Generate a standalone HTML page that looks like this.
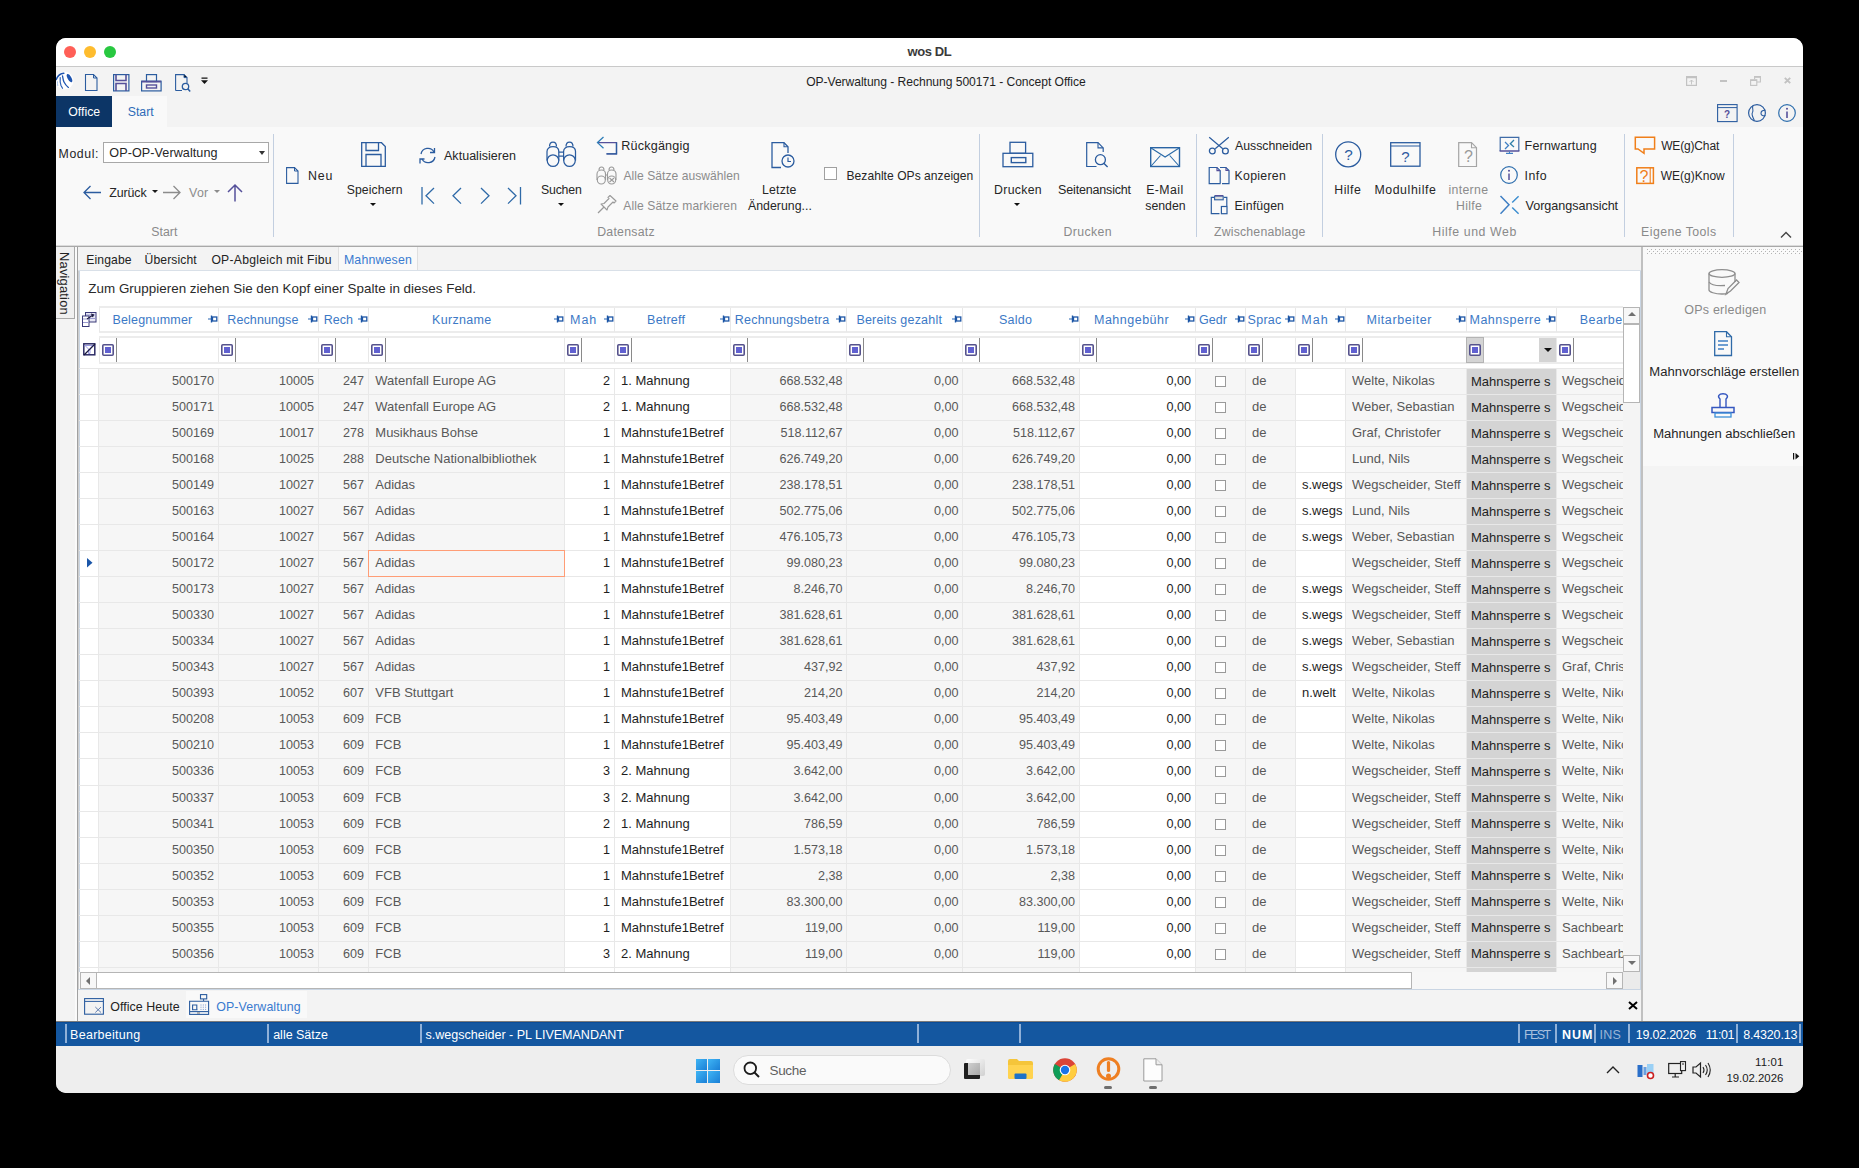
<!DOCTYPE html><html><head><meta charset="utf-8"><style>
html,body{margin:0;padding:0;background:#000;width:1859px;height:1168px;overflow:hidden}
body{font-family:"Liberation Sans", sans-serif;position:relative}
.t{position:absolute;white-space:nowrap;line-height:1em}
#win{position:absolute;left:0;top:0;width:1859px;height:1168px;clip-path:inset(38px 56px 75px 56px round 10px);background:#f3f3f3}
svg{overflow:visible}
</style></head><body><div id="win">
<div style="position:absolute;left:56px;top:38px;width:1747px;height:28px;background:#ffffff"></div>
<div style="position:absolute;left:56px;top:66px;width:1747px;height:1px;background:#c9c9c9"></div>
<div style="position:absolute;left:64px;top:46px;width:12px;height:12px;background:#ff5f57;border-radius:50%"></div>
<div style="position:absolute;left:84px;top:46px;width:12px;height:12px;background:#febc2e;border-radius:50%"></div>
<div style="position:absolute;left:104px;top:46px;width:12px;height:12px;background:#28c840;border-radius:50%"></div>
<div class="t" style="left:907.5px;top:45.00px;font-size:13px;color:#3a3a3a;font-weight:bold;;letter-spacing:-0.397px">wos DL</div>
<svg style="position:absolute;left:54px;top:70px;" width="22" height="22" viewBox="0 0 22 22"><circle cx="10.5" cy="10.5" r="9" fill="#ffffff"/>
<path d="M2.2 9.5 C3.5 6 6.5 3.5 9.8 3.2" stroke="#1f55b0" stroke-width="1.6" fill="none" stroke-linecap="round"/>
<path d="M8.5 5.8 C9 8 9 10 10 12 C11 14 12.5 16 14.4 17.4" stroke="#1f55b0" stroke-width="1.3" fill="none" stroke-linecap="round"/>
<path d="M6.2 7.5 C6 10 6 13 7 15.5 L8.5 18.3" stroke="#2f63b8" stroke-width="1.2" fill="none" stroke-linecap="round"/>
<path d="M3.4 11.3 C3.3 13 3.5 14.5 3.9 16" stroke="#a8c4ea" stroke-width="1" fill="none"/>
<ellipse cx="15.5" cy="8.1" rx="1.9" ry="4.6" transform="rotate(-28 15.5 8.1)" fill="#1f55b0"/></svg>
<svg style="position:absolute;left:85px;top:74px;" width="13" height="18" viewBox="0 0 13 18"><path d="M0.5 0.5 H8.5 L12 4 V16.5 H0.5 Z" stroke="#2b5c9f" stroke-width="1.1" fill="none"/><path d="M8.5 0.5 V4 H12" stroke="#2b5c9f" stroke-width="1" fill="none"/></svg>
<svg style="position:absolute;left:113px;top:74px;" width="17" height="18" viewBox="0 0 17 18"><rect x="0.6" y="0.6" width="15.3" height="16.3" stroke="#2b5c9f" stroke-width="1.2" fill="none"/><path d="M3 0.6 V6.5 H13 V0.6" stroke="#55509a" stroke-width="1.6" fill="none"/><path d="M3 16.9 V9.5 H13 V16.9" stroke="#55509a" stroke-width="1.6" fill="none"/></svg>
<svg style="position:absolute;left:141px;top:74px;" width="21" height="18" viewBox="0 0 21 18"><rect x="5.5" y="0.6" width="10" height="7" stroke="#2b5c9f" stroke-width="1.2" fill="none"/><rect x="0.6" y="7.2" width="19.5" height="9.7" stroke="#2b5c9f" stroke-width="1.2" fill="none"/><path d="M0.6 7.6 H20" stroke="#55509a" stroke-width="1.6"/><rect x="5.5" y="11" width="10" height="3" stroke="#55509a" stroke-width="1.4" fill="none"/></svg>
<svg style="position:absolute;left:175px;top:74px;" width="16" height="19" viewBox="0 0 16 19"><path d="M0.6 16.5 V0.6 H9 L12 3.6 V9" stroke="#2b5c9f" stroke-width="1.1" fill="none"/><path d="M0.6 16.5 H7" stroke="#2b5c9f" stroke-width="1.1"/><path d="M9 0.6 V3.6 H12" stroke="#2b5c9f" stroke-width="1"/><circle cx="10.5" cy="12.5" r="3.2" stroke="#2b5c9f" stroke-width="1.3" fill="none"/><path d="M12.8 14.8 L15.2 17.4" stroke="#2b5c9f" stroke-width="1.5"/></svg>
<svg style="position:absolute;left:201px;top:77px;" width="8" height="8" viewBox="0 0 8 8"><path d="M0.5 1.2 H6.5" stroke="#111" stroke-width="1.2"/><path d="M0 3.2 H7 L3.5 7 Z" fill="#111"/></svg>
<div class="t" style="left:806.2px;top:76.00px;font-size:12.1px;color:#1f1f1f;font-weight:normal;;letter-spacing:-0.041px">OP-Verwaltung - Rechnung 500171 - Concept Office</div>
<svg style="position:absolute;left:1686px;top:76px;" width="11" height="10" viewBox="0 0 11 10"><rect x="0.6" y="0.6" width="9.8" height="8.8" stroke="#c2c2c2" stroke-width="1.2" fill="none"/><path d="M0.6 1.4 H10.4" stroke="#c2c2c2" stroke-width="1.6"/><path d="M5.5 8.5 V4 M3.5 6 L5.5 4 L7.5 6" stroke="#c2c2c2" stroke-width="0.9" fill="none"/></svg>
<svg style="position:absolute;left:1720px;top:80px;" width="8" height="2" viewBox="0 0 8 2"><path d="M0 1 H7" stroke="#c2c2c2" stroke-width="2"/></svg>
<svg style="position:absolute;left:1750px;top:76px;" width="11" height="10" viewBox="0 0 11 10"><path d="M4.6 3.2 V0.6 H10.4 V6 H7" stroke="#c2c2c2" stroke-width="1.1" fill="none"/><path d="M4.6 1.1 H10.4" stroke="#c2c2c2" stroke-width="1.2"/><rect x="0.6" y="3.8" width="6.2" height="5.6" stroke="#c2c2c2" stroke-width="1.1" fill="none"/><path d="M0.6 4.3 H6.8" stroke="#c2c2c2" stroke-width="1.2"/></svg>
<svg style="position:absolute;left:1784px;top:77px;" width="7" height="7" viewBox="0 0 7 7"><path d="M0.8 0.8 L6.2 6.2 M6.2 0.8 L0.8 6.2" stroke="#c2c2c2" stroke-width="1.9"/></svg>
<div style="position:absolute;left:56px;top:96px;width:56px;height:31px;background:#0c3566"></div>
<div class="t" style="left:68.3px;top:106.00px;font-size:12.3px;color:#ffffff;font-weight:normal;;letter-spacing:-0.011px">Office</div>
<div style="position:absolute;left:112px;top:96px;width:55px;height:31px;background:#f9f9f9"></div>
<div class="t" style="left:127.7px;top:106.00px;font-size:12.3px;color:#2e6cb8;font-weight:normal;;letter-spacing:0.012px">Start</div>
<svg style="position:absolute;left:1717px;top:104px;" width="21" height="18" viewBox="0 0 21 18"><rect x="0.6" y="0.6" width="19.5" height="17" stroke="#2b5c9f" stroke-width="1.1" fill="none"/><path d="M0.6 3.6 H20" stroke="#2b5c9f" stroke-width="1"/></svg>
<div class="t" style="left:1427px;width:600px;text-align:center;top:110.00px;font-size:10px;color:#55509a;font-weight:bold;">?</div>
<svg style="position:absolute;left:1748px;top:104px;" width="19" height="19" viewBox="0 0 19 19"><circle cx="9" cy="9" r="8.4" stroke="#2b5c9f" stroke-width="1.2" fill="none"/><path d="M5 1.5 C3.5 4 6 6 4.5 8.5 C3 10.5 5 13 6.5 16.8" stroke="#2b5c9f" stroke-width="1.1" fill="none"/><path d="M17.3 6.2 C14.5 6 12.8 7.5 13 9.6 C13.2 11.6 15.5 12.3 17.4 11.6" stroke="#2b5c9f" stroke-width="1.1" fill="none"/></svg>
<svg style="position:absolute;left:1778px;top:104px;" width="19" height="19" viewBox="0 0 19 19"><circle cx="9" cy="9" r="8.3" stroke="#2f6fae" stroke-width="1.2" fill="none"/><path d="M9 7.5 V14" stroke="#55509a" stroke-width="1.6"/><circle cx="9" cy="4.8" r="1" fill="#55509a"/></svg>
<div style="position:absolute;left:56px;top:127px;width:1747px;height:119px;background:#f9f9f9"></div>
<div style="position:absolute;left:56px;top:245px;width:1747px;height:1px;background:#dcdcdc"></div>
<div style="position:absolute;left:56px;top:246px;width:1747px;height:1px;background:#a9a9a9"></div>
<div class="t" style="left:58.6px;top:148.00px;font-size:12.3px;color:#262626;font-weight:normal;;letter-spacing:0.582px">Modul:</div>
<div style="position:absolute;left:103px;top:142px;width:166px;height:21px;background:#fff;border:1px solid #a8a8a8;box-sizing:border-box"></div>
<div class="t" style="left:109.3px;top:147.00px;font-size:12.6px;color:#262626;font-weight:normal;;letter-spacing:0.074px">OP-OP-Verwaltung</div>
<div style="position:absolute;left:259.0px;top:151px;width:0;height:0;border-left:3.5px solid transparent;border-right:3.5px solid transparent;border-top:4.0px solid #333"></div>
<svg style="position:absolute;left:83px;top:185px;" width="19" height="16" viewBox="0 0 19 16"><path d="M1 7.5 H18 M7.5 1 L1 7.5 L7.5 14" stroke="#2b5c9f" stroke-width="1.3" fill="none"/></svg>
<div class="t" style="left:109.3px;top:187.00px;font-size:12.4px;color:#262626;font-weight:normal;;letter-spacing:-0.114px">Zurück</div>
<div style="position:absolute;left:151.5px;top:189.5px;width:0;height:0;border-left:3.0px solid transparent;border-right:3.0px solid transparent;border-top:3.5px solid #1a1a1a"></div>
<svg style="position:absolute;left:163px;top:185px;" width="19" height="16" viewBox="0 0 19 16"><path d="M0 7.5 H17 M10.5 1 L17 7.5 L10.5 14" stroke="#8c8c8c" stroke-width="1.3" fill="none"/></svg>
<div class="t" style="left:189.1px;top:187.00px;font-size:12.4px;color:#8c8c8c;font-weight:normal;;letter-spacing:0.214px">Vor</div>
<div style="position:absolute;left:214.0px;top:189.5px;width:0;height:0;border-left:3.0px solid transparent;border-right:3.0px solid transparent;border-top:3.5px solid #8c8c8c"></div>
<svg style="position:absolute;left:227px;top:184px;" width="17" height="18" viewBox="0 0 17 18"><path d="M8 17.5 V1.5 M1 8 L8 1 L15 8" stroke="#55509a" stroke-width="1.5" fill="none"/></svg>
<div class="t" style="left:151.3px;top:226.00px;font-size:12.3px;color:#8a8a8a;font-weight:normal;;letter-spacing:0.012px">Start</div>
<div style="position:absolute;left:273px;top:134px;width:1px;height:103px;background:#c3cfe0"></div>
<svg style="position:absolute;left:286px;top:167px;" width="13" height="17" viewBox="0 0 13 17"><path d="M0.6 0.6 H8.5 L12 4 V16.4 H0.6 Z" stroke="#2b5c9f" stroke-width="1.1" fill="none"/><path d="M8.5 0.6 V4 H12" stroke="#2b5c9f" stroke-width="1" fill="none"/></svg>
<div class="t" style="left:307.9px;top:170.00px;font-size:12.4px;color:#262626;font-weight:normal;;letter-spacing:0.930px">Neu</div>
<svg style="position:absolute;left:361px;top:142px;" width="25" height="25" viewBox="0 0 25 25"><path d="M0.7 0.7 H20.5 L24.3 4.5 V24.3 H0.7 Z" stroke="#2b5c9f" stroke-width="1.3" fill="none"/><path d="M5 0.7 V8.5 H17.5 V0.7" stroke="#2b5c9f" stroke-width="1.3" fill="none"/><path d="M5 24.3 V12.5 H20 V24.3" stroke="#2b5c9f" stroke-width="1.3" fill="none"/></svg>
<div class="t" style="left:346.7px;top:184.00px;font-size:12.2px;color:#262626;font-weight:normal;;letter-spacing:0.125px">Speichern</div>
<div style="position:absolute;left:370.0px;top:203px;width:0;height:0;border-left:3.0px solid transparent;border-right:3.0px solid transparent;border-top:3.5px solid #111"></div>
<svg style="position:absolute;left:419px;top:147px;" width="18" height="18" viewBox="0 0 18 18"><path d="M2 7 A7 7 0 0 1 15 5" stroke="#2b5c9f" stroke-width="1.3" fill="none"/><path d="M15.5 1 V5.5 H11" stroke="#2b5c9f" stroke-width="1.3" fill="none"/><path d="M16 10 A7 7 0 0 1 3 12" stroke="#2b5c9f" stroke-width="1.3" fill="none"/><path d="M1 16.5 V12 H5.5" stroke="#2b5c9f" stroke-width="1.3" fill="none"/></svg>
<div class="t" style="left:444px;top:150.00px;font-size:12.5px;color:#262626;font-weight:normal;;letter-spacing:0.032px">Aktualisieren</div>
<svg style="position:absolute;left:421px;top:187px;" width="14" height="18" viewBox="0 0 14 18"><path d="M1 0 V17.5" stroke="#2f6aa8" stroke-width="1.3"/><path d="M13 1 L5 8.8 L13 16.6" stroke="#2f6aa8" stroke-width="1.3" fill="none"/></svg>
<svg style="position:absolute;left:451px;top:187px;" width="11" height="18" viewBox="0 0 11 18"><path d="M10 1 L2 8.8 L10 16.6" stroke="#2f6aa8" stroke-width="1.3" fill="none"/></svg>
<svg style="position:absolute;left:480px;top:187px;" width="11" height="18" viewBox="0 0 11 18"><path d="M1 1 L9 8.8 L1 16.6" stroke="#2f6aa8" stroke-width="1.3" fill="none"/></svg>
<svg style="position:absolute;left:507px;top:187px;" width="15" height="18" viewBox="0 0 15 18"><path d="M13.5 0 V17.5" stroke="#2f6aa8" stroke-width="1.3"/><path d="M1 1 L9 8.8 L1 16.6" stroke="#2f6aa8" stroke-width="1.3" fill="none"/></svg>
<svg style="position:absolute;left:546px;top:141px;" width="31" height="28" viewBox="0 0 31 28"><g transform="scale(1.0)" stroke="#2b5c9f" stroke-width="1.25" fill="none">
<path d="M3.5 5.6 C3.5 2.5 5 1 7 1 C9 1 10.5 2.5 10.5 5.6"/><path d="M20 5.6 C20 2.5 21.5 1 23.5 1 C25.5 1 27 2.5 27 5.6"/>
<path d="M1 19.5 V10.5 C1 7.5 3.5 5.6 7 5.6 C10.5 5.6 12.8 7.5 12.8 10.5 V19.5"/><path d="M17.6 19.5 V10.5 C17.6 7.5 20 5.6 23.5 5.6 C27 5.6 29.5 7.5 29.5 10.5 V19.5"/>
<circle cx="7" cy="19.6" r="5.8"/><circle cx="23.5" cy="19.6" r="5.8"/>
<path d="M12.8 11 H17.6 M12.8 15 H17.6"/></g></svg>
<div class="t" style="left:540.9px;top:184.00px;font-size:12.3px;color:#262626;font-weight:normal;;letter-spacing:-0.153px">Suchen</div>
<div style="position:absolute;left:558.0px;top:203px;width:0;height:0;border-left:3.0px solid transparent;border-right:3.0px solid transparent;border-top:3.5px solid #111"></div>
<svg style="position:absolute;left:596px;top:136px;" width="22" height="20" viewBox="0 0 22 20"><path d="M1.5 6.6 H20.5 V17.9 H10.5" stroke="#55509a" stroke-width="1.3" fill="none"/><path d="M20.5 6.6 V17.9 H10.5" stroke="#2b5c9f" stroke-width="1.3" fill="none"/><path d="M7.5 1 L1.5 6.6 L7.5 12.3" stroke="#2f7fb8" stroke-width="1.3" fill="none"/></svg>
<div class="t" style="left:621.3px;top:140.00px;font-size:12.6px;color:#262626;font-weight:normal;;letter-spacing:0.177px">Rückgängig</div>
<svg style="position:absolute;left:596px;top:166px;" width="22" height="19" viewBox="0 0 22 19"><g stroke="#9a9a9a" stroke-width="1.1" fill="none"><path d="M3 4 C3 2 4 1 5.5 1 C7 1 8 2 8 4 M13 4 C13 2 14 1 15.5 1 C17 1 18 2 18 4"/><path d="M1 14 V8 C1 5.5 3 4 5.5 4 C8 4 9.5 5.5 9.5 8 V14 M11.5 14 V8 C11.5 5.5 13 4 15.5 4 C18 4 20 5.5 20 8 V14"/><circle cx="5.3" cy="14" r="4"/><circle cx="15.7" cy="14" r="4"/><path d="M9.5 9 H11.5 M13.5 12 L18 16 M18 12 L13.5 16"/></g></svg>
<div class="t" style="left:623.4px;top:170.00px;font-size:12.1px;color:#8c8c8c;font-weight:normal;;letter-spacing:0.042px">Alle Sätze auswählen</div>
<svg style="position:absolute;left:597px;top:195px;" width="20" height="19" viewBox="0 0 20 19"><path d="M1 18 L7 12" stroke="#9a9a9a" stroke-width="1.2"/><path d="M4 9 L10 15 L11 12 L16 7 L17 8 L19 6 L13 0.5 L11 2.5 L12 3.5 L7 8.5 Z" stroke="#9a9a9a" stroke-width="1.1" fill="none" stroke-linejoin="round"/></svg>
<div class="t" style="left:623.3px;top:200.00px;font-size:12.1px;color:#8c8c8c;font-weight:normal;;letter-spacing:0.108px">Alle Sätze markieren</div>
<svg style="position:absolute;left:771px;top:142px;" width="25" height="27" viewBox="0 0 25 27"><path d="M10 25.5 H1 V0.7 H13 L17 4.7 V11" stroke="#2b5c9f" stroke-width="1.3" fill="none"/><path d="M13 0.7 V4.7 H17" stroke="#2b5c9f" stroke-width="1.1" fill="none"/><circle cx="17" cy="19" r="6" stroke="#2b5c9f" stroke-width="1.3" fill="#f9f9f9"/><path d="M17 15.5 V19.5 H20" stroke="#2b5c9f" stroke-width="1.2" fill="none"/></svg>
<div class="t" style="left:762.1px;top:184.00px;font-size:12.3px;color:#262626;font-weight:normal;;letter-spacing:0.148px">Letzte</div>
<div class="t" style="left:748px;top:200.00px;font-size:12.3px;color:#262626;font-weight:normal;;letter-spacing:0.034px">Änderung...</div>
<div style="position:absolute;left:824px;top:167px;width:13px;height:13px;border:1px solid #a0a0a0;box-sizing:border-box;background:#fff"></div>
<div class="t" style="left:846.5px;top:170.00px;font-size:12.05px;color:#262626;font-weight:normal;;letter-spacing:0.045px">Bezahlte OPs anzeigen</div>
<div class="t" style="left:597.2px;top:226.00px;font-size:12.3px;color:#8a8a8a;font-weight:normal;;letter-spacing:0.260px">Datensatz</div>
<div style="position:absolute;left:979px;top:134px;width:1px;height:103px;background:#c3cfe0"></div>
<svg style="position:absolute;left:1002px;top:141px;" width="32" height="27" viewBox="0 0 32 27"><rect x="8" y="1.3" width="15.6" height="11" stroke="#2b5c9f" stroke-width="1.3" fill="none"/><rect x="1" y="12.3" width="29.8" height="13.4" stroke="#2b5c9f" stroke-width="1.3" fill="#f9f9f9"/><rect x="9.3" y="16.6" width="14.5" height="5" stroke="#2b5c9f" stroke-width="1.4" fill="none"/></svg>
<div class="t" style="left:994.1px;top:184.00px;font-size:12.3px;color:#262626;font-weight:normal;;letter-spacing:0.292px">Drucken</div>
<div style="position:absolute;left:1014.0px;top:203px;width:0;height:0;border-left:3.0px solid transparent;border-right:3.0px solid transparent;border-top:3.5px solid #111"></div>
<svg style="position:absolute;left:1086px;top:142px;" width="24" height="26" viewBox="0 0 24 26"><path d="M10.5 24.5 H0.7 V0.7 H12 L17.2 5.9 V10" stroke="#2b5c9f" stroke-width="1.2" fill="none"/><path d="M12 0.7 V5.9 H17.2" stroke="#2b5c9f" stroke-width="1.1" fill="none"/><circle cx="14.4" cy="17.7" r="5" stroke="#2b5c9f" stroke-width="1.3" fill="none"/><path d="M17.8 21.2 L21.6 25" stroke="#2b5c9f" stroke-width="1.4"/></svg>
<div class="t" style="left:1058.1px;top:184.00px;font-size:12.5px;color:#262626;font-weight:normal;;letter-spacing:-0.173px">Seitenansicht</div>
<svg style="position:absolute;left:1150px;top:147px;" width="31" height="21" viewBox="0 0 31 21"><rect x="0.7" y="0.7" width="28.8" height="18.8" stroke="#2a64a4" stroke-width="1.4" fill="none"/><path d="M0.7 0.7 L15.1 10 L29.5 0.7 M0.7 19.5 L10.5 8.5 M29.5 19.5 L19.7 8.5" stroke="#2a6aa8" stroke-width="1.1" fill="none"/></svg>
<div class="t" style="left:1146.2px;top:184.00px;font-size:12.3px;color:#262626;font-weight:normal;;letter-spacing:0.418px">E-Mail</div>
<div class="t" style="left:1145.3px;top:200.00px;font-size:12.3px;color:#262626;font-weight:normal;;letter-spacing:-0.001px">senden</div>
<div class="t" style="left:1063.4px;top:226.00px;font-size:12.3px;color:#8a8a8a;font-weight:normal;;letter-spacing:0.408px">Drucken</div>
<div style="position:absolute;left:1196px;top:134px;width:1px;height:103px;background:#c3cfe0"></div>
<svg style="position:absolute;left:1208px;top:136px;" width="22" height="19" viewBox="0 0 22 19"><path d="M1.2 1.2 L14.8 12.8 M20.8 1.2 L7.2 12.8" stroke="#2b5c9f" stroke-width="1.2" fill="none"/><circle cx="4.3" cy="15" r="2.9" stroke="#2b5c9f" stroke-width="1.3" fill="#f9f9f9"/><circle cx="17.4" cy="15" r="2.9" stroke="#2b5c9f" stroke-width="1.3" fill="#f9f9f9"/></svg>
<div class="t" style="left:1235.1px;top:140.00px;font-size:12.3px;color:#262626;font-weight:normal;;letter-spacing:-0.019px">Ausschneiden</div>
<svg style="position:absolute;left:1208px;top:166px;" width="22" height="19" viewBox="0 0 22 19"><path d="M12.6 17.6 H1.2 V1.5 H9 L12.2 4.7 V17.6" stroke="#2b5c9f" stroke-width="1.2" fill="none"/><path d="M9 1.5 V4.7 H12.2" stroke="#55509a" stroke-width="1.2" fill="none"/><path d="M12 1.5 H18 L21 4.5 V17.6 H14" stroke="#2b5c9f" stroke-width="1.2" fill="none"/><path d="M18 1.5 V4.5 H21" stroke="#55509a" stroke-width="1.2" fill="none"/></svg>
<div class="t" style="left:1234.5px;top:170.00px;font-size:12.3px;color:#262626;font-weight:normal;;letter-spacing:0.302px">Kopieren</div>
<svg style="position:absolute;left:1210px;top:194px;" width="18" height="21" viewBox="0 0 18 21"><path d="M4 3.3 H1.3 V19.6 H9.5" stroke="#2b5c9f" stroke-width="1.2" fill="none"/><path d="M14 3.3 H16.8 V12" stroke="#2b5c9f" stroke-width="1.2" fill="none"/><rect x="4.6" y="2" width="8.6" height="3.8" stroke="#2b5c9f" stroke-width="1.1" fill="#e0e0e0"/><path d="M5 1.6 H13" stroke="#55509a" stroke-width="1.4"/><rect x="11.4" y="12.5" width="5.6" height="7.2" stroke="#2b5c9f" stroke-width="1.2" fill="none"/></svg>
<div class="t" style="left:1234.5px;top:200.00px;font-size:12.3px;color:#262626;font-weight:normal;;letter-spacing:0.128px">Einfügen</div>
<div class="t" style="left:1214px;top:226.00px;font-size:12.3px;color:#8a8a8a;font-weight:normal;;letter-spacing:0.183px">Zwischenablage</div>
<div style="position:absolute;left:1322px;top:134px;width:1px;height:103px;background:#c3cfe0"></div>
<svg style="position:absolute;left:1335px;top:141px;" width="28" height="27" viewBox="0 0 28 27"><circle cx="13.2" cy="13.4" r="12.5" stroke="#2b5c9f" stroke-width="1.3" fill="none"/></svg>
<div class="t" style="left:1048.5px;width:600px;text-align:center;top:147.00px;font-size:15.3px;color:#2b5c9f;font-weight:normal;">?</div>
<div class="t" style="left:1334.3px;top:184.00px;font-size:12.3px;color:#262626;font-weight:normal;;letter-spacing:0.460px">Hilfe</div>
<svg style="position:absolute;left:1390px;top:142px;" width="31" height="25" viewBox="0 0 31 25"><rect x="0.7" y="0.7" width="29.3" height="23.5" stroke="#2b5c9f" stroke-width="1.3" fill="none"/><path d="M0.7 4 H30" stroke="#2b5c9f" stroke-width="1.2"/></svg>
<div class="t" style="left:1105.5px;width:600px;text-align:center;top:149.00px;font-size:15px;color:#2e5aa0;font-weight:normal;">?</div>
<div class="t" style="left:1374.4px;top:184.00px;font-size:12.3px;color:#262626;font-weight:normal;;letter-spacing:0.599px">Modulhilfe</div>
<svg style="position:absolute;left:1458px;top:142px;" width="20" height="26" viewBox="0 0 20 26"><path d="M0.7 0.7 H13.5 L18.5 5.7 V24.5 H0.7 Z" stroke="#a5a5a5" stroke-width="1.2" fill="none"/><path d="M13.5 0.7 V5.7 H18.5" stroke="#a5a5a5" stroke-width="1.1" fill="none"/></svg>
<div class="t" style="left:1168.5px;width:600px;text-align:center;top:149.00px;font-size:16px;color:#9a9a9a;font-weight:normal;">?</div>
<div class="t" style="left:1448.4px;top:184.00px;font-size:12.3px;color:#8c8c8c;font-weight:normal;;letter-spacing:0.340px">interne</div>
<div class="t" style="left:1456.1px;top:200.00px;font-size:12.3px;color:#8c8c8c;font-weight:normal;;letter-spacing:0.310px">Hilfe</div>
<svg style="position:absolute;left:1499px;top:136px;" width="21" height="20" viewBox="0 0 21 20"><path d="M1.2 15 V1.3 H19.8 V15" stroke="#2b5c9f" stroke-width="1.2" fill="none" opacity="0.9"/><path d="M0.6 15 H20.4" stroke="#55509a" stroke-width="1.6"/><path d="M7 17.3 H14" stroke="#3f7fc4" stroke-width="1.3"/><path d="M10.5 15.5 V17" stroke="#3f7fc4" stroke-width="1"/><path d="M6 6 L9.5 9.5 L6 13" stroke="#3f7fc4" stroke-width="1.3" fill="none"/><path d="M15 4 L11.3 7.8 L15 11" stroke="#2e7fa8" stroke-width="1.3" fill="none"/></svg>
<div class="t" style="left:1524.6px;top:140.00px;font-size:12.5px;color:#262626;font-weight:normal;;letter-spacing:0.188px">Fernwartung</div>
<svg style="position:absolute;left:1500px;top:166px;" width="19" height="19" viewBox="0 0 19 19"><circle cx="9" cy="9" r="8.3" stroke="#2f6fae" stroke-width="1.2" fill="none"/><path d="M9 7.5 V14" stroke="#55509a" stroke-width="1.5"/><circle cx="9" cy="4.8" r="1" fill="#55509a"/></svg>
<div class="t" style="left:1524.6px;top:170.00px;font-size:12.3px;color:#262626;font-weight:normal;;letter-spacing:0.476px">Info</div>
<svg style="position:absolute;left:1499px;top:195px;" width="21" height="20" viewBox="0 0 21 20"><path d="M1.5 1 L10 9.8 L1.5 18.8" stroke="#3f7fc4" stroke-width="1.5" fill="none"/><path d="M19.6 1.3 L13.2 7.5 M13.2 12.5 L19.6 18.8" stroke="#3f8fd0" stroke-width="1.5" fill="none"/></svg>
<div class="t" style="left:1525.6px;top:200.00px;font-size:12.6px;color:#262626;font-weight:normal;;letter-spacing:-0.044px">Vorgangsansicht</div>
<div class="t" style="left:1432.3px;top:226.00px;font-size:12.3px;color:#8a8a8a;font-weight:normal;;letter-spacing:0.577px">Hilfe und Web</div>
<div style="position:absolute;left:1624px;top:134px;width:1px;height:103px;background:#c3cfe0"></div>
<svg style="position:absolute;left:1634px;top:136px;" width="22" height="19" viewBox="0 0 22 19"><path d="M1.3 1.3 H20.6 V13 H10 V17.3 L4 13 H1.3 Z" stroke="#f07f1a" stroke-width="1.5" fill="none" stroke-linejoin="miter"/></svg>
<div class="t" style="left:1661.2px;top:140.00px;font-size:12.0px;color:#262626;font-weight:normal;;letter-spacing:-0.164px">WE(g)Chat</div>
<svg style="position:absolute;left:1636px;top:167px;" width="18" height="17" viewBox="0 0 18 17"><rect x="0.8" y="0.8" width="16.6" height="15.6" stroke="#f07f1a" stroke-width="1.5" fill="none"/><path d="M14.2 0.8 V16.4" stroke="#f07f1a" stroke-width="1.1"/></svg>
<div class="t" style="left:1344px;width:600px;text-align:center;top:169.00px;font-size:16px;color:#f07f1a;font-weight:normal;">?</div>
<div class="t" style="left:1660.8px;top:170.00px;font-size:12.0px;color:#262626;font-weight:normal;;letter-spacing:-0.006px">WE(g)Know</div>
<div class="t" style="left:1641.1px;top:226.00px;font-size:12.3px;color:#8a8a8a;font-weight:normal;;letter-spacing:0.440px">Eigene Tools</div>
<div style="position:absolute;left:1733px;top:134px;width:1px;height:103px;background:#c3cfe0"></div>
<svg style="position:absolute;left:1780px;top:231px;" width="12" height="8" viewBox="0 0 12 8"><path d="M1 6.5 L6 1.5 L11 6.5" stroke="#444" stroke-width="1.4" fill="none"/></svg>
<div style="position:absolute;left:56px;top:247px;width:19px;height:72px;background:#f0f0f0;border-right:1px solid #a9a9a9;border-bottom:1px solid #a9a9a9;box-sizing:border-box"></div>
<div style="position:absolute;left:75px;top:247px;width:2px;height:775px;background:#fafafa"></div>
<div class="t" style="left:56.5px;top:252px;font-size:12.9px;color:#222;writing-mode:vertical-rl;line-height:14px;letter-spacing:0.2px">Navigation</div>
<div style="position:absolute;left:77px;top:247px;width:1px;height:775px;background:#a0a0a0"></div>
<div style="position:absolute;left:78px;top:247px;width:1564px;height:23px;background:#f3f3f3"></div>
<div style="position:absolute;left:78px;top:270px;width:1564px;height:1px;background:#d9e0e8"></div>
<div style="position:absolute;left:338px;top:247px;width:80px;height:23px;background:#f9f9f9;border-left:1px solid #e0e0e0;border-right:1px solid #e0e0e0;box-sizing:border-box"></div>
<div class="t" style="left:86.2px;top:254.00px;font-size:12.15px;color:#222;font-weight:normal;;letter-spacing:0.133px">Eingabe</div>
<div class="t" style="left:144.6px;top:254.00px;font-size:12.15px;color:#222;font-weight:normal;;letter-spacing:0.099px">Übersicht</div>
<div class="t" style="left:211.4px;top:254.00px;font-size:12.15px;color:#222;font-weight:normal;;letter-spacing:0.287px">OP-Abgleich mit Fibu</div>
<div class="t" style="left:343.9px;top:254.00px;font-size:12.35px;color:#3a7bd0;font-weight:normal;;letter-spacing:0.176px">Mahnwesen</div>
<div style="position:absolute;left:78px;top:271px;width:1564px;height:719px;background:#ffffff"></div>
<div style="position:absolute;left:78px;top:271px;width:1px;height:751px;background:#cfcfcf"></div>
<div style="position:absolute;left:79px;top:271px;width:1px;height:719px;background:#c9d5e3"></div>
<div class="t" style="left:88.3px;top:282.00px;font-size:13.4px;color:#2a2a2a;font-weight:normal;;letter-spacing:0.023px">Zum Gruppieren ziehen Sie den Kopf einer Spalte in dieses Feld.</div>
<div style="position:absolute;left:0;top:0;width:1623px;height:972px;overflow:hidden">
<div style="position:absolute;left:99px;top:306px;width:1524px;height:2px;background:#ececec"></div>
<div style="position:absolute;left:99px;top:331px;width:1524px;height:2px;background:#ececec"></div>
<div style="position:absolute;left:99px;top:336px;width:1524px;height:2px;background:#ececec"></div>
<div style="position:absolute;left:99px;top:362px;width:1524px;height:2px;background:#ececec"></div>
<div style="position:absolute;left:99px;top:308px;width:1px;height:24px;background:#e8e8e8"></div>
<div style="position:absolute;left:99px;top:338px;width:1px;height:24px;background:#e8e8e8"></div>
<svg style="position:absolute;left:208px;top:315px;" width="10" height="9" viewBox="0 0 10 9"><path d="M0 4 H3" stroke="#4a7fc0" stroke-width="1.2"/><path d="M3.5 0.5 V7.5" stroke="#1d56a6" stroke-width="1.4"/><rect x="4.5" y="2" width="4.3" height="4" stroke="#1d56a6" stroke-width="1.3" fill="none"/></svg>
<div class="t" style="left:112.39999999999999px;top:314.00px;font-size:12.5px;color:#3c79c6;font-weight:normal;letter-spacing:0.2px">Belegnummer</div>
<svg style="position:absolute;left:102px;top:344px;" width="12" height="12" viewBox="0 0 12 12"><rect x="0.8" y="0.8" width="10.4" height="10.4" rx="1" stroke="#55528c" stroke-width="1.6" fill="#fff"/><rect x="3" y="3" width="6" height="6" fill="#6060d0"/></svg>
<div style="position:absolute;left:116px;top:338px;width:1px;height:24px;background:#8a8a8a"></div>
<div style="position:absolute;left:218px;top:308px;width:1px;height:24px;background:#e8e8e8"></div>
<div style="position:absolute;left:218px;top:338px;width:1px;height:24px;background:#e8e8e8"></div>
<svg style="position:absolute;left:308px;top:315px;" width="10" height="9" viewBox="0 0 10 9"><path d="M0 4 H3" stroke="#4a7fc0" stroke-width="1.2"/><path d="M3.5 0.5 V7.5" stroke="#1d56a6" stroke-width="1.4"/><rect x="4.5" y="2" width="4.3" height="4" stroke="#1d56a6" stroke-width="1.3" fill="none"/></svg>
<div class="t" style="left:227.3px;top:314.00px;font-size:12.5px;color:#3c79c6;font-weight:normal;letter-spacing:0.1px">Rechnungse</div>
<svg style="position:absolute;left:221px;top:344px;" width="12" height="12" viewBox="0 0 12 12"><rect x="0.8" y="0.8" width="10.4" height="10.4" rx="1" stroke="#55528c" stroke-width="1.6" fill="#fff"/><rect x="3" y="3" width="6" height="6" fill="#6060d0"/></svg>
<div style="position:absolute;left:235px;top:338px;width:1px;height:24px;background:#8a8a8a"></div>
<div style="position:absolute;left:318px;top:308px;width:1px;height:24px;background:#e8e8e8"></div>
<div style="position:absolute;left:318px;top:338px;width:1px;height:24px;background:#e8e8e8"></div>
<svg style="position:absolute;left:358px;top:315px;" width="10" height="9" viewBox="0 0 10 9"><path d="M0 4 H3" stroke="#4a7fc0" stroke-width="1.2"/><path d="M3.5 0.5 V7.5" stroke="#1d56a6" stroke-width="1.4"/><rect x="4.5" y="2" width="4.3" height="4" stroke="#1d56a6" stroke-width="1.3" fill="none"/></svg>
<div class="t" style="left:323.8px;top:314.00px;font-size:12.5px;color:#3c79c6;font-weight:normal;letter-spacing:0px">Rech</div>
<svg style="position:absolute;left:321px;top:344px;" width="12" height="12" viewBox="0 0 12 12"><rect x="0.8" y="0.8" width="10.4" height="10.4" rx="1" stroke="#55528c" stroke-width="1.6" fill="#fff"/><rect x="3" y="3" width="6" height="6" fill="#6060d0"/></svg>
<div style="position:absolute;left:335px;top:338px;width:1px;height:24px;background:#8a8a8a"></div>
<div style="position:absolute;left:368px;top:308px;width:1px;height:24px;background:#e8e8e8"></div>
<div style="position:absolute;left:368px;top:338px;width:1px;height:24px;background:#e8e8e8"></div>
<svg style="position:absolute;left:554px;top:315px;" width="10" height="9" viewBox="0 0 10 9"><path d="M0 4 H3" stroke="#4a7fc0" stroke-width="1.2"/><path d="M3.5 0.5 V7.5" stroke="#1d56a6" stroke-width="1.4"/><rect x="4.5" y="2" width="4.3" height="4" stroke="#1d56a6" stroke-width="1.3" fill="none"/></svg>
<div class="t" style="left:432.1px;top:314.00px;font-size:12.5px;color:#3c79c6;font-weight:normal;letter-spacing:0.3px">Kurzname</div>
<svg style="position:absolute;left:371px;top:344px;" width="12" height="12" viewBox="0 0 12 12"><rect x="0.8" y="0.8" width="10.4" height="10.4" rx="1" stroke="#55528c" stroke-width="1.6" fill="#fff"/><rect x="3" y="3" width="6" height="6" fill="#6060d0"/></svg>
<div style="position:absolute;left:385px;top:338px;width:1px;height:24px;background:#8a8a8a"></div>
<div style="position:absolute;left:564px;top:308px;width:1px;height:24px;background:#e8e8e8"></div>
<div style="position:absolute;left:564px;top:338px;width:1px;height:24px;background:#e8e8e8"></div>
<svg style="position:absolute;left:604px;top:315px;" width="10" height="9" viewBox="0 0 10 9"><path d="M0 4 H3" stroke="#4a7fc0" stroke-width="1.2"/><path d="M3.5 0.5 V7.5" stroke="#1d56a6" stroke-width="1.4"/><rect x="4.5" y="2" width="4.3" height="4" stroke="#1d56a6" stroke-width="1.3" fill="none"/></svg>
<div class="t" style="left:570.0px;top:314.00px;font-size:12.5px;color:#3c79c6;font-weight:normal;letter-spacing:1.0px">Mah</div>
<svg style="position:absolute;left:567px;top:344px;" width="12" height="12" viewBox="0 0 12 12"><rect x="0.8" y="0.8" width="10.4" height="10.4" rx="1" stroke="#55528c" stroke-width="1.6" fill="#fff"/><rect x="3" y="3" width="6" height="6" fill="#6060d0"/></svg>
<div style="position:absolute;left:581px;top:338px;width:1px;height:24px;background:#8a8a8a"></div>
<div style="position:absolute;left:614px;top:308px;width:1px;height:24px;background:#e8e8e8"></div>
<div style="position:absolute;left:614px;top:338px;width:1px;height:24px;background:#e8e8e8"></div>
<svg style="position:absolute;left:720px;top:315px;" width="10" height="9" viewBox="0 0 10 9"><path d="M0 4 H3" stroke="#4a7fc0" stroke-width="1.2"/><path d="M3.5 0.5 V7.5" stroke="#1d56a6" stroke-width="1.4"/><rect x="4.5" y="2" width="4.3" height="4" stroke="#1d56a6" stroke-width="1.3" fill="none"/></svg>
<div class="t" style="left:647.0999999999999px;top:314.00px;font-size:12.5px;color:#3c79c6;font-weight:normal;letter-spacing:0.2px">Betreff</div>
<svg style="position:absolute;left:617px;top:344px;" width="12" height="12" viewBox="0 0 12 12"><rect x="0.8" y="0.8" width="10.4" height="10.4" rx="1" stroke="#55528c" stroke-width="1.6" fill="#fff"/><rect x="3" y="3" width="6" height="6" fill="#6060d0"/></svg>
<div style="position:absolute;left:631px;top:338px;width:1px;height:24px;background:#8a8a8a"></div>
<div style="position:absolute;left:730px;top:308px;width:1px;height:24px;background:#e8e8e8"></div>
<div style="position:absolute;left:730px;top:338px;width:1px;height:24px;background:#e8e8e8"></div>
<svg style="position:absolute;left:836px;top:315px;" width="10" height="9" viewBox="0 0 10 9"><path d="M0 4 H3" stroke="#4a7fc0" stroke-width="1.2"/><path d="M3.5 0.5 V7.5" stroke="#1d56a6" stroke-width="1.4"/><rect x="4.5" y="2" width="4.3" height="4" stroke="#1d56a6" stroke-width="1.3" fill="none"/></svg>
<div class="t" style="left:734.8px;top:314.00px;font-size:12.5px;color:#3c79c6;font-weight:normal;letter-spacing:0.2px">Rechnungsbetra</div>
<svg style="position:absolute;left:733px;top:344px;" width="12" height="12" viewBox="0 0 12 12"><rect x="0.8" y="0.8" width="10.4" height="10.4" rx="1" stroke="#55528c" stroke-width="1.6" fill="#fff"/><rect x="3" y="3" width="6" height="6" fill="#6060d0"/></svg>
<div style="position:absolute;left:747px;top:338px;width:1px;height:24px;background:#8a8a8a"></div>
<div style="position:absolute;left:846px;top:308px;width:1px;height:24px;background:#e8e8e8"></div>
<div style="position:absolute;left:846px;top:338px;width:1px;height:24px;background:#e8e8e8"></div>
<svg style="position:absolute;left:952px;top:315px;" width="10" height="9" viewBox="0 0 10 9"><path d="M0 4 H3" stroke="#4a7fc0" stroke-width="1.2"/><path d="M3.5 0.5 V7.5" stroke="#1d56a6" stroke-width="1.4"/><rect x="4.5" y="2" width="4.3" height="4" stroke="#1d56a6" stroke-width="1.3" fill="none"/></svg>
<div class="t" style="left:856.4px;top:314.00px;font-size:12.5px;color:#3c79c6;font-weight:normal;letter-spacing:0.2px">Bereits gezahlt</div>
<svg style="position:absolute;left:849px;top:344px;" width="12" height="12" viewBox="0 0 12 12"><rect x="0.8" y="0.8" width="10.4" height="10.4" rx="1" stroke="#55528c" stroke-width="1.6" fill="#fff"/><rect x="3" y="3" width="6" height="6" fill="#6060d0"/></svg>
<div style="position:absolute;left:863px;top:338px;width:1px;height:24px;background:#8a8a8a"></div>
<div style="position:absolute;left:962px;top:308px;width:1px;height:24px;background:#e8e8e8"></div>
<div style="position:absolute;left:962px;top:338px;width:1px;height:24px;background:#e8e8e8"></div>
<svg style="position:absolute;left:1069px;top:315px;" width="10" height="9" viewBox="0 0 10 9"><path d="M0 4 H3" stroke="#4a7fc0" stroke-width="1.2"/><path d="M3.5 0.5 V7.5" stroke="#1d56a6" stroke-width="1.4"/><rect x="4.5" y="2" width="4.3" height="4" stroke="#1d56a6" stroke-width="1.3" fill="none"/></svg>
<div class="t" style="left:998.9px;top:314.00px;font-size:12.5px;color:#3c79c6;font-weight:normal;letter-spacing:0.3px">Saldo</div>
<svg style="position:absolute;left:965px;top:344px;" width="12" height="12" viewBox="0 0 12 12"><rect x="0.8" y="0.8" width="10.4" height="10.4" rx="1" stroke="#55528c" stroke-width="1.6" fill="#fff"/><rect x="3" y="3" width="6" height="6" fill="#6060d0"/></svg>
<div style="position:absolute;left:979px;top:338px;width:1px;height:24px;background:#8a8a8a"></div>
<div style="position:absolute;left:1079px;top:308px;width:1px;height:24px;background:#e8e8e8"></div>
<div style="position:absolute;left:1079px;top:338px;width:1px;height:24px;background:#e8e8e8"></div>
<svg style="position:absolute;left:1185px;top:315px;" width="10" height="9" viewBox="0 0 10 9"><path d="M0 4 H3" stroke="#4a7fc0" stroke-width="1.2"/><path d="M3.5 0.5 V7.5" stroke="#1d56a6" stroke-width="1.4"/><rect x="4.5" y="2" width="4.3" height="4" stroke="#1d56a6" stroke-width="1.3" fill="none"/></svg>
<div class="t" style="left:1094.0px;top:314.00px;font-size:12.5px;color:#3c79c6;font-weight:normal;letter-spacing:0.5px">Mahngebühr</div>
<svg style="position:absolute;left:1082px;top:344px;" width="12" height="12" viewBox="0 0 12 12"><rect x="0.8" y="0.8" width="10.4" height="10.4" rx="1" stroke="#55528c" stroke-width="1.6" fill="#fff"/><rect x="3" y="3" width="6" height="6" fill="#6060d0"/></svg>
<div style="position:absolute;left:1096px;top:338px;width:1px;height:24px;background:#8a8a8a"></div>
<div style="position:absolute;left:1195px;top:308px;width:1px;height:24px;background:#e8e8e8"></div>
<div style="position:absolute;left:1195px;top:338px;width:1px;height:24px;background:#e8e8e8"></div>
<svg style="position:absolute;left:1235px;top:315px;" width="10" height="9" viewBox="0 0 10 9"><path d="M0 4 H3" stroke="#4a7fc0" stroke-width="1.2"/><path d="M3.5 0.5 V7.5" stroke="#1d56a6" stroke-width="1.4"/><rect x="4.5" y="2" width="4.3" height="4" stroke="#1d56a6" stroke-width="1.3" fill="none"/></svg>
<div class="t" style="left:1199.1px;top:314.00px;font-size:12.5px;color:#3c79c6;font-weight:normal;letter-spacing:0px">Gedr</div>
<svg style="position:absolute;left:1198px;top:344px;" width="12" height="12" viewBox="0 0 12 12"><rect x="0.8" y="0.8" width="10.4" height="10.4" rx="1" stroke="#55528c" stroke-width="1.6" fill="#fff"/><rect x="3" y="3" width="6" height="6" fill="#6060d0"/></svg>
<div style="position:absolute;left:1212px;top:338px;width:1px;height:24px;background:#8a8a8a"></div>
<div style="position:absolute;left:1245px;top:308px;width:1px;height:24px;background:#e8e8e8"></div>
<div style="position:absolute;left:1245px;top:338px;width:1px;height:24px;background:#e8e8e8"></div>
<svg style="position:absolute;left:1285px;top:315px;" width="10" height="9" viewBox="0 0 10 9"><path d="M0 4 H3" stroke="#4a7fc0" stroke-width="1.2"/><path d="M3.5 0.5 V7.5" stroke="#1d56a6" stroke-width="1.4"/><rect x="4.5" y="2" width="4.3" height="4" stroke="#1d56a6" stroke-width="1.3" fill="none"/></svg>
<div class="t" style="left:1247.5px;top:314.00px;font-size:12.5px;color:#3c79c6;font-weight:normal;letter-spacing:0.3px">Sprac</div>
<svg style="position:absolute;left:1248px;top:344px;" width="12" height="12" viewBox="0 0 12 12"><rect x="0.8" y="0.8" width="10.4" height="10.4" rx="1" stroke="#55528c" stroke-width="1.6" fill="#fff"/><rect x="3" y="3" width="6" height="6" fill="#6060d0"/></svg>
<div style="position:absolute;left:1262px;top:338px;width:1px;height:24px;background:#8a8a8a"></div>
<div style="position:absolute;left:1295px;top:308px;width:1px;height:24px;background:#e8e8e8"></div>
<div style="position:absolute;left:1295px;top:338px;width:1px;height:24px;background:#e8e8e8"></div>
<svg style="position:absolute;left:1335px;top:315px;" width="10" height="9" viewBox="0 0 10 9"><path d="M0 4 H3" stroke="#4a7fc0" stroke-width="1.2"/><path d="M3.5 0.5 V7.5" stroke="#1d56a6" stroke-width="1.4"/><rect x="4.5" y="2" width="4.3" height="4" stroke="#1d56a6" stroke-width="1.3" fill="none"/></svg>
<div class="t" style="left:1301.3px;top:314.00px;font-size:12.5px;color:#3c79c6;font-weight:normal;letter-spacing:1.0px">Mah</div>
<svg style="position:absolute;left:1298px;top:344px;" width="12" height="12" viewBox="0 0 12 12"><rect x="0.8" y="0.8" width="10.4" height="10.4" rx="1" stroke="#55528c" stroke-width="1.6" fill="#fff"/><rect x="3" y="3" width="6" height="6" fill="#6060d0"/></svg>
<div style="position:absolute;left:1312px;top:338px;width:1px;height:24px;background:#8a8a8a"></div>
<div style="position:absolute;left:1345px;top:308px;width:1px;height:24px;background:#e8e8e8"></div>
<div style="position:absolute;left:1345px;top:338px;width:1px;height:24px;background:#e8e8e8"></div>
<svg style="position:absolute;left:1456px;top:315px;" width="10" height="9" viewBox="0 0 10 9"><path d="M0 4 H3" stroke="#4a7fc0" stroke-width="1.2"/><path d="M3.5 0.5 V7.5" stroke="#1d56a6" stroke-width="1.4"/><rect x="4.5" y="2" width="4.3" height="4" stroke="#1d56a6" stroke-width="1.3" fill="none"/></svg>
<div class="t" style="left:1366.3999999999999px;top:314.00px;font-size:12.5px;color:#3c79c6;font-weight:normal;letter-spacing:0.6px">Mitarbeiter</div>
<svg style="position:absolute;left:1348px;top:344px;" width="12" height="12" viewBox="0 0 12 12"><rect x="0.8" y="0.8" width="10.4" height="10.4" rx="1" stroke="#55528c" stroke-width="1.6" fill="#fff"/><rect x="3" y="3" width="6" height="6" fill="#6060d0"/></svg>
<div style="position:absolute;left:1362px;top:338px;width:1px;height:24px;background:#8a8a8a"></div>
<div style="position:absolute;left:1466px;top:308px;width:1px;height:24px;background:#e8e8e8"></div>
<div style="position:absolute;left:1466px;top:338px;width:1px;height:24px;background:#e8e8e8"></div>
<svg style="position:absolute;left:1546px;top:315px;" width="10" height="9" viewBox="0 0 10 9"><path d="M0 4 H3" stroke="#4a7fc0" stroke-width="1.2"/><path d="M3.5 0.5 V7.5" stroke="#1d56a6" stroke-width="1.4"/><rect x="4.5" y="2" width="4.3" height="4" stroke="#1d56a6" stroke-width="1.3" fill="none"/></svg>
<div class="t" style="left:1469.5px;top:314.00px;font-size:12.5px;color:#3c79c6;font-weight:normal;letter-spacing:0.5px">Mahnsperre</div>
<svg style="position:absolute;left:1469px;top:344px;" width="12" height="12" viewBox="0 0 12 12"><rect x="0.8" y="0.8" width="10.4" height="10.4" rx="1" stroke="#55528c" stroke-width="1.6" fill="#fff"/><rect x="3" y="3" width="6" height="6" fill="#6060d0"/></svg>
<div style="position:absolute;left:1483px;top:338px;width:1px;height:24px;background:#8a8a8a"></div>
<div style="position:absolute;left:1556px;top:308px;width:1px;height:24px;background:#e8e8e8"></div>
<div style="position:absolute;left:1556px;top:338px;width:1px;height:24px;background:#e8e8e8"></div>
<div class="t" style="left:1579.8px;top:314.00px;font-size:12.5px;color:#3c79c6;font-weight:normal;letter-spacing:0.4px">Bearbe</div>
<svg style="position:absolute;left:1559px;top:344px;" width="12" height="12" viewBox="0 0 12 12"><rect x="0.8" y="0.8" width="10.4" height="10.4" rx="1" stroke="#55528c" stroke-width="1.6" fill="#fff"/><rect x="3" y="3" width="6" height="6" fill="#6060d0"/></svg>
<div style="position:absolute;left:1573px;top:338px;width:1px;height:24px;background:#8a8a8a"></div>
<svg style="position:absolute;left:82px;top:312px;" width="15" height="15" viewBox="0 0 15 15"><rect x="3.5" y="0.5" width="10.5" height="9.5" stroke="#3b3a78" stroke-width="1" fill="#e8e8f4"/><path d="M4 3 H13.5 M4 6.5 H13.5" stroke="#9a9ad0" stroke-width="1.2"/><rect x="0.5" y="4" width="6.5" height="10.5" stroke="#3b3a78" stroke-width="1" fill="#fff"/><path d="M1 7 H6.5 M1 10.5 H6.5" stroke="#9a9ad0" stroke-width="1.2"/><path d="M5 7 L11 3 M9 2 L11.5 2.8 L10.5 5" stroke="#1a1a40" stroke-width="1.1" fill="none"/></svg>
<svg style="position:absolute;left:83px;top:343px;" width="13" height="13" viewBox="0 0 13 13"><rect x="0.8" y="0.8" width="11" height="11" stroke="#2d2c66" stroke-width="1.5" fill="#fff"/><path d="M2 2.5 H10 L7 6 V10.5 L5.5 10.5 V6 Z" stroke="#8f8fe0" stroke-width="0.9" fill="none"/><path d="M1 12 L12 1" stroke="#1a1a40" stroke-width="1.2"/></svg>
<div style="position:absolute;left:1466px;top:337px;width:18px;height:26px;background:#d4d4d4;border:1px solid #b4b4b4;box-sizing:border-box"></div>
<svg style="position:absolute;left:1469px;top:344px;" width="12" height="12" viewBox="0 0 12 12"><rect x="0.8" y="0.8" width="10.4" height="10.4" rx="1" stroke="#55528c" stroke-width="1.6" fill="#fff"/><rect x="3" y="3" width="6" height="6" fill="#6060d0"/></svg>
<div style="position:absolute;left:1539px;top:338px;width:17px;height:24px;background:#d4d4d4"></div>
<div style="position:absolute;left:1543.5px;top:348px;width:0;height:0;border-left:4.0px solid transparent;border-right:4.0px solid transparent;border-top:4.5px solid #111"></div>
<div style="position:absolute;left:99px;top:368px;width:119px;height:604px;background:#f6f6f6"></div>
<div style="position:absolute;left:218px;top:368px;width:100px;height:604px;background:#f6f6f6"></div>
<div style="position:absolute;left:318px;top:368px;width:50px;height:604px;background:#f6f6f6"></div>
<div style="position:absolute;left:368px;top:368px;width:196px;height:604px;background:#f6f6f6"></div>
<div style="position:absolute;left:564px;top:368px;width:50px;height:604px;background:#ffffff"></div>
<div style="position:absolute;left:614px;top:368px;width:116px;height:604px;background:#ffffff"></div>
<div style="position:absolute;left:730px;top:368px;width:116px;height:604px;background:#f6f6f6"></div>
<div style="position:absolute;left:846px;top:368px;width:116px;height:604px;background:#f6f6f6"></div>
<div style="position:absolute;left:962px;top:368px;width:117px;height:604px;background:#f6f6f6"></div>
<div style="position:absolute;left:1079px;top:368px;width:116px;height:604px;background:#ffffff"></div>
<div style="position:absolute;left:1195px;top:368px;width:50px;height:604px;background:#f6f6f6"></div>
<div style="position:absolute;left:1245px;top:368px;width:50px;height:604px;background:#f6f6f6"></div>
<div style="position:absolute;left:1295px;top:368px;width:50px;height:604px;background:#ffffff"></div>
<div style="position:absolute;left:1345px;top:368px;width:121px;height:604px;background:#f6f6f6"></div>
<div style="position:absolute;left:1466px;top:368px;width:90px;height:604px;background:#d4d4d4"></div>
<div style="position:absolute;left:1556px;top:368px;width:67px;height:604px;background:#f6f6f6"></div>
<div style="position:absolute;left:79px;top:368px;width:1544px;height:1px;background:#e8e8e8"></div>
<div style="position:absolute;left:79px;top:394px;width:1544px;height:1px;background:#e8e8e8"></div>
<div style="position:absolute;left:79px;top:420px;width:1544px;height:1px;background:#e8e8e8"></div>
<div style="position:absolute;left:79px;top:446px;width:1544px;height:1px;background:#e8e8e8"></div>
<div style="position:absolute;left:79px;top:472px;width:1544px;height:1px;background:#e8e8e8"></div>
<div style="position:absolute;left:79px;top:498px;width:1544px;height:1px;background:#e8e8e8"></div>
<div style="position:absolute;left:79px;top:524px;width:1544px;height:1px;background:#e8e8e8"></div>
<div style="position:absolute;left:79px;top:550px;width:1544px;height:1px;background:#e8e8e8"></div>
<div style="position:absolute;left:79px;top:576px;width:1544px;height:1px;background:#e8e8e8"></div>
<div style="position:absolute;left:79px;top:602px;width:1544px;height:1px;background:#e8e8e8"></div>
<div style="position:absolute;left:79px;top:628px;width:1544px;height:1px;background:#e8e8e8"></div>
<div style="position:absolute;left:79px;top:654px;width:1544px;height:1px;background:#e8e8e8"></div>
<div style="position:absolute;left:79px;top:680px;width:1544px;height:1px;background:#e8e8e8"></div>
<div style="position:absolute;left:79px;top:706px;width:1544px;height:1px;background:#e8e8e8"></div>
<div style="position:absolute;left:79px;top:732px;width:1544px;height:1px;background:#e8e8e8"></div>
<div style="position:absolute;left:79px;top:758px;width:1544px;height:1px;background:#e8e8e8"></div>
<div style="position:absolute;left:79px;top:785px;width:1544px;height:1px;background:#e8e8e8"></div>
<div style="position:absolute;left:79px;top:811px;width:1544px;height:1px;background:#e8e8e8"></div>
<div style="position:absolute;left:79px;top:837px;width:1544px;height:1px;background:#e8e8e8"></div>
<div style="position:absolute;left:79px;top:863px;width:1544px;height:1px;background:#e8e8e8"></div>
<div style="position:absolute;left:79px;top:889px;width:1544px;height:1px;background:#e8e8e8"></div>
<div style="position:absolute;left:79px;top:915px;width:1544px;height:1px;background:#e8e8e8"></div>
<div style="position:absolute;left:79px;top:941px;width:1544px;height:1px;background:#e8e8e8"></div>
<div style="position:absolute;left:79px;top:967px;width:1544px;height:1px;background:#e8e8e8"></div>
<div style="position:absolute;left:79px;top:993px;width:1544px;height:1px;background:#e8e8e8"></div>
<div style="position:absolute;left:98px;top:368px;width:1px;height:604px;background:#e8e8e8"></div>
<div style="position:absolute;left:218px;top:368px;width:1px;height:604px;background:#e8e8e8"></div>
<div style="position:absolute;left:318px;top:368px;width:1px;height:604px;background:#e8e8e8"></div>
<div style="position:absolute;left:368px;top:368px;width:1px;height:604px;background:#e8e8e8"></div>
<div style="position:absolute;left:564px;top:368px;width:1px;height:604px;background:#e8e8e8"></div>
<div style="position:absolute;left:614px;top:368px;width:1px;height:604px;background:#e8e8e8"></div>
<div style="position:absolute;left:730px;top:368px;width:1px;height:604px;background:#e8e8e8"></div>
<div style="position:absolute;left:846px;top:368px;width:1px;height:604px;background:#e8e8e8"></div>
<div style="position:absolute;left:962px;top:368px;width:1px;height:604px;background:#e8e8e8"></div>
<div style="position:absolute;left:1079px;top:368px;width:1px;height:604px;background:#e8e8e8"></div>
<div style="position:absolute;left:1195px;top:368px;width:1px;height:604px;background:#e8e8e8"></div>
<div style="position:absolute;left:1245px;top:368px;width:1px;height:604px;background:#e8e8e8"></div>
<div style="position:absolute;left:1295px;top:368px;width:1px;height:604px;background:#e8e8e8"></div>
<div style="position:absolute;left:1345px;top:368px;width:1px;height:604px;background:#e8e8e8"></div>
<div style="position:absolute;left:1466px;top:368px;width:1px;height:604px;background:#e8e8e8"></div>
<div style="position:absolute;left:1556px;top:368px;width:1px;height:604px;background:#e8e8e8"></div>
<div class="t" style="left:-386px;width:600px;text-align:right;top:375.00px;font-size:12.6px;color:#585858;font-weight:normal;">500170</div>
<div class="t" style="left:-286px;width:600px;text-align:right;top:375.00px;font-size:12.6px;color:#585858;font-weight:normal;">10005</div>
<div class="t" style="left:-236px;width:600px;text-align:right;top:375.00px;font-size:12.6px;color:#585858;font-weight:normal;">247</div>
<div class="t" style="left:375.3px;top:374.00px;font-size:13.0px;color:#585858;font-weight:normal;">Watenfall Europe AG</div>
<div class="t" style="left:10px;width:600px;text-align:right;top:375.00px;font-size:12.6px;color:#1e1e1e;font-weight:normal;">2</div>
<div class="t" style="left:621px;top:374.00px;font-size:13.0px;color:#1e1e1e;font-weight:normal;">1. Mahnung</div>
<div class="t" style="left:242.5px;width:600px;text-align:right;top:375.00px;font-size:12.6px;color:#585858;font-weight:normal;">668.532,48</div>
<div class="t" style="left:358.5px;width:600px;text-align:right;top:375.00px;font-size:12.6px;color:#585858;font-weight:normal;">0,00</div>
<div class="t" style="left:475px;width:600px;text-align:right;top:375.00px;font-size:12.6px;color:#585858;font-weight:normal;">668.532,48</div>
<div class="t" style="left:591px;width:600px;text-align:right;top:375.00px;font-size:12.6px;color:#1e1e1e;font-weight:normal;">0,00</div>
<div style="position:absolute;left:1215px;top:376px;width:11px;height:11px;border:1px solid #9a9a9a;box-sizing:border-box;background:#fff"></div>
<div class="t" style="left:1252px;top:374.00px;font-size:13.0px;color:#585858;font-weight:normal;">de</div>
<div style="position:absolute;left:1352px;top:369px;width:112px;height:25px;overflow:hidden">
<div class="t" style="left:0px;top:5.00px;font-size:13.0px;color:#585858;font-weight:normal;">Welte, Nikolas</div>
</div>
<div class="t" style="left:1471px;top:375.00px;font-size:13.0px;color:#1e1e1e;font-weight:normal;">Mahnsperre s</div>
<div class="t" style="left:1562px;top:374.00px;font-size:13.0px;color:#585858;font-weight:normal;">Wegscheider, Stefan</div>
<div class="t" style="left:-386px;width:600px;text-align:right;top:401.00px;font-size:12.6px;color:#585858;font-weight:normal;">500171</div>
<div class="t" style="left:-286px;width:600px;text-align:right;top:401.00px;font-size:12.6px;color:#585858;font-weight:normal;">10005</div>
<div class="t" style="left:-236px;width:600px;text-align:right;top:401.00px;font-size:12.6px;color:#585858;font-weight:normal;">247</div>
<div class="t" style="left:375.3px;top:400.00px;font-size:13.0px;color:#585858;font-weight:normal;">Watenfall Europe AG</div>
<div class="t" style="left:10px;width:600px;text-align:right;top:401.00px;font-size:12.6px;color:#1e1e1e;font-weight:normal;">2</div>
<div class="t" style="left:621px;top:400.00px;font-size:13.0px;color:#1e1e1e;font-weight:normal;">1. Mahnung</div>
<div class="t" style="left:242.5px;width:600px;text-align:right;top:401.00px;font-size:12.6px;color:#585858;font-weight:normal;">668.532,48</div>
<div class="t" style="left:358.5px;width:600px;text-align:right;top:401.00px;font-size:12.6px;color:#585858;font-weight:normal;">0,00</div>
<div class="t" style="left:475px;width:600px;text-align:right;top:401.00px;font-size:12.6px;color:#585858;font-weight:normal;">668.532,48</div>
<div class="t" style="left:591px;width:600px;text-align:right;top:401.00px;font-size:12.6px;color:#1e1e1e;font-weight:normal;">0,00</div>
<div style="position:absolute;left:1215px;top:402px;width:11px;height:11px;border:1px solid #9a9a9a;box-sizing:border-box;background:#fff"></div>
<div class="t" style="left:1252px;top:400.00px;font-size:13.0px;color:#585858;font-weight:normal;">de</div>
<div style="position:absolute;left:1352px;top:395px;width:112px;height:25px;overflow:hidden">
<div class="t" style="left:0px;top:5.00px;font-size:13.0px;color:#585858;font-weight:normal;">Weber, Sebastian</div>
</div>
<div class="t" style="left:1471px;top:401.00px;font-size:13.0px;color:#1e1e1e;font-weight:normal;">Mahnsperre s</div>
<div class="t" style="left:1562px;top:400.00px;font-size:13.0px;color:#585858;font-weight:normal;">Wegscheider, Stefan</div>
<div class="t" style="left:-386px;width:600px;text-align:right;top:427.00px;font-size:12.6px;color:#585858;font-weight:normal;">500169</div>
<div class="t" style="left:-286px;width:600px;text-align:right;top:427.00px;font-size:12.6px;color:#585858;font-weight:normal;">10017</div>
<div class="t" style="left:-236px;width:600px;text-align:right;top:427.00px;font-size:12.6px;color:#585858;font-weight:normal;">278</div>
<div class="t" style="left:375.3px;top:426.00px;font-size:13.0px;color:#585858;font-weight:normal;">Musikhaus Bohse</div>
<div class="t" style="left:10px;width:600px;text-align:right;top:427.00px;font-size:12.6px;color:#1e1e1e;font-weight:normal;">1</div>
<div class="t" style="left:621px;top:426.00px;font-size:13.0px;color:#1e1e1e;font-weight:normal;">Mahnstufe1Betref</div>
<div class="t" style="left:242.5px;width:600px;text-align:right;top:427.00px;font-size:12.6px;color:#585858;font-weight:normal;">518.112,67</div>
<div class="t" style="left:358.5px;width:600px;text-align:right;top:427.00px;font-size:12.6px;color:#585858;font-weight:normal;">0,00</div>
<div class="t" style="left:475px;width:600px;text-align:right;top:427.00px;font-size:12.6px;color:#585858;font-weight:normal;">518.112,67</div>
<div class="t" style="left:591px;width:600px;text-align:right;top:427.00px;font-size:12.6px;color:#1e1e1e;font-weight:normal;">0,00</div>
<div style="position:absolute;left:1215px;top:428px;width:11px;height:11px;border:1px solid #9a9a9a;box-sizing:border-box;background:#fff"></div>
<div class="t" style="left:1252px;top:426.00px;font-size:13.0px;color:#585858;font-weight:normal;">de</div>
<div style="position:absolute;left:1352px;top:421px;width:112px;height:25px;overflow:hidden">
<div class="t" style="left:0px;top:5.00px;font-size:13.0px;color:#585858;font-weight:normal;">Graf, Christofer</div>
</div>
<div class="t" style="left:1471px;top:427.00px;font-size:13.0px;color:#1e1e1e;font-weight:normal;">Mahnsperre s</div>
<div class="t" style="left:1562px;top:426.00px;font-size:13.0px;color:#585858;font-weight:normal;">Wegscheider, Stefan</div>
<div class="t" style="left:-386px;width:600px;text-align:right;top:453.00px;font-size:12.6px;color:#585858;font-weight:normal;">500168</div>
<div class="t" style="left:-286px;width:600px;text-align:right;top:453.00px;font-size:12.6px;color:#585858;font-weight:normal;">10025</div>
<div class="t" style="left:-236px;width:600px;text-align:right;top:453.00px;font-size:12.6px;color:#585858;font-weight:normal;">288</div>
<div class="t" style="left:375.3px;top:452.00px;font-size:13.0px;color:#585858;font-weight:normal;">Deutsche Nationalbibliothek</div>
<div class="t" style="left:10px;width:600px;text-align:right;top:453.00px;font-size:12.6px;color:#1e1e1e;font-weight:normal;">1</div>
<div class="t" style="left:621px;top:452.00px;font-size:13.0px;color:#1e1e1e;font-weight:normal;">Mahnstufe1Betref</div>
<div class="t" style="left:242.5px;width:600px;text-align:right;top:453.00px;font-size:12.6px;color:#585858;font-weight:normal;">626.749,20</div>
<div class="t" style="left:358.5px;width:600px;text-align:right;top:453.00px;font-size:12.6px;color:#585858;font-weight:normal;">0,00</div>
<div class="t" style="left:475px;width:600px;text-align:right;top:453.00px;font-size:12.6px;color:#585858;font-weight:normal;">626.749,20</div>
<div class="t" style="left:591px;width:600px;text-align:right;top:453.00px;font-size:12.6px;color:#1e1e1e;font-weight:normal;">0,00</div>
<div style="position:absolute;left:1215px;top:454px;width:11px;height:11px;border:1px solid #9a9a9a;box-sizing:border-box;background:#fff"></div>
<div class="t" style="left:1252px;top:452.00px;font-size:13.0px;color:#585858;font-weight:normal;">de</div>
<div style="position:absolute;left:1352px;top:447px;width:112px;height:25px;overflow:hidden">
<div class="t" style="left:0px;top:5.00px;font-size:13.0px;color:#585858;font-weight:normal;">Lund, Nils</div>
</div>
<div class="t" style="left:1471px;top:453.00px;font-size:13.0px;color:#1e1e1e;font-weight:normal;">Mahnsperre s</div>
<div class="t" style="left:1562px;top:452.00px;font-size:13.0px;color:#585858;font-weight:normal;">Wegscheider, Stefan</div>
<div class="t" style="left:-386px;width:600px;text-align:right;top:479.00px;font-size:12.6px;color:#585858;font-weight:normal;">500149</div>
<div class="t" style="left:-286px;width:600px;text-align:right;top:479.00px;font-size:12.6px;color:#585858;font-weight:normal;">10027</div>
<div class="t" style="left:-236px;width:600px;text-align:right;top:479.00px;font-size:12.6px;color:#585858;font-weight:normal;">567</div>
<div class="t" style="left:375.3px;top:478.00px;font-size:13.0px;color:#585858;font-weight:normal;">Adidas</div>
<div class="t" style="left:10px;width:600px;text-align:right;top:479.00px;font-size:12.6px;color:#1e1e1e;font-weight:normal;">1</div>
<div class="t" style="left:621px;top:478.00px;font-size:13.0px;color:#1e1e1e;font-weight:normal;">Mahnstufe1Betref</div>
<div class="t" style="left:242.5px;width:600px;text-align:right;top:479.00px;font-size:12.6px;color:#585858;font-weight:normal;">238.178,51</div>
<div class="t" style="left:358.5px;width:600px;text-align:right;top:479.00px;font-size:12.6px;color:#585858;font-weight:normal;">0,00</div>
<div class="t" style="left:475px;width:600px;text-align:right;top:479.00px;font-size:12.6px;color:#585858;font-weight:normal;">238.178,51</div>
<div class="t" style="left:591px;width:600px;text-align:right;top:479.00px;font-size:12.6px;color:#1e1e1e;font-weight:normal;">0,00</div>
<div style="position:absolute;left:1215px;top:480px;width:11px;height:11px;border:1px solid #9a9a9a;box-sizing:border-box;background:#fff"></div>
<div class="t" style="left:1252px;top:478.00px;font-size:13.0px;color:#585858;font-weight:normal;">de</div>
<div class="t" style="left:1302px;top:478.00px;font-size:13.0px;color:#1e1e1e;font-weight:normal;">s.wegs</div>
<div style="position:absolute;left:1352px;top:473px;width:112px;height:25px;overflow:hidden">
<div class="t" style="left:0px;top:5.00px;font-size:13.0px;color:#585858;font-weight:normal;">Wegscheider, Steff</div>
</div>
<div class="t" style="left:1471px;top:479.00px;font-size:13.0px;color:#1e1e1e;font-weight:normal;">Mahnsperre s</div>
<div class="t" style="left:1562px;top:478.00px;font-size:13.0px;color:#585858;font-weight:normal;">Wegscheider, Stefan</div>
<div class="t" style="left:-386px;width:600px;text-align:right;top:505.00px;font-size:12.6px;color:#585858;font-weight:normal;">500163</div>
<div class="t" style="left:-286px;width:600px;text-align:right;top:505.00px;font-size:12.6px;color:#585858;font-weight:normal;">10027</div>
<div class="t" style="left:-236px;width:600px;text-align:right;top:505.00px;font-size:12.6px;color:#585858;font-weight:normal;">567</div>
<div class="t" style="left:375.3px;top:504.00px;font-size:13.0px;color:#585858;font-weight:normal;">Adidas</div>
<div class="t" style="left:10px;width:600px;text-align:right;top:505.00px;font-size:12.6px;color:#1e1e1e;font-weight:normal;">1</div>
<div class="t" style="left:621px;top:504.00px;font-size:13.0px;color:#1e1e1e;font-weight:normal;">Mahnstufe1Betref</div>
<div class="t" style="left:242.5px;width:600px;text-align:right;top:505.00px;font-size:12.6px;color:#585858;font-weight:normal;">502.775,06</div>
<div class="t" style="left:358.5px;width:600px;text-align:right;top:505.00px;font-size:12.6px;color:#585858;font-weight:normal;">0,00</div>
<div class="t" style="left:475px;width:600px;text-align:right;top:505.00px;font-size:12.6px;color:#585858;font-weight:normal;">502.775,06</div>
<div class="t" style="left:591px;width:600px;text-align:right;top:505.00px;font-size:12.6px;color:#1e1e1e;font-weight:normal;">0,00</div>
<div style="position:absolute;left:1215px;top:506px;width:11px;height:11px;border:1px solid #9a9a9a;box-sizing:border-box;background:#fff"></div>
<div class="t" style="left:1252px;top:504.00px;font-size:13.0px;color:#585858;font-weight:normal;">de</div>
<div class="t" style="left:1302px;top:504.00px;font-size:13.0px;color:#1e1e1e;font-weight:normal;">s.wegs</div>
<div style="position:absolute;left:1352px;top:499px;width:112px;height:25px;overflow:hidden">
<div class="t" style="left:0px;top:5.00px;font-size:13.0px;color:#585858;font-weight:normal;">Lund, Nils</div>
</div>
<div class="t" style="left:1471px;top:505.00px;font-size:13.0px;color:#1e1e1e;font-weight:normal;">Mahnsperre s</div>
<div class="t" style="left:1562px;top:504.00px;font-size:13.0px;color:#585858;font-weight:normal;">Wegscheider, Stefan</div>
<div class="t" style="left:-386px;width:600px;text-align:right;top:531.00px;font-size:12.6px;color:#585858;font-weight:normal;">500164</div>
<div class="t" style="left:-286px;width:600px;text-align:right;top:531.00px;font-size:12.6px;color:#585858;font-weight:normal;">10027</div>
<div class="t" style="left:-236px;width:600px;text-align:right;top:531.00px;font-size:12.6px;color:#585858;font-weight:normal;">567</div>
<div class="t" style="left:375.3px;top:530.00px;font-size:13.0px;color:#585858;font-weight:normal;">Adidas</div>
<div class="t" style="left:10px;width:600px;text-align:right;top:531.00px;font-size:12.6px;color:#1e1e1e;font-weight:normal;">1</div>
<div class="t" style="left:621px;top:530.00px;font-size:13.0px;color:#1e1e1e;font-weight:normal;">Mahnstufe1Betref</div>
<div class="t" style="left:242.5px;width:600px;text-align:right;top:531.00px;font-size:12.6px;color:#585858;font-weight:normal;">476.105,73</div>
<div class="t" style="left:358.5px;width:600px;text-align:right;top:531.00px;font-size:12.6px;color:#585858;font-weight:normal;">0,00</div>
<div class="t" style="left:475px;width:600px;text-align:right;top:531.00px;font-size:12.6px;color:#585858;font-weight:normal;">476.105,73</div>
<div class="t" style="left:591px;width:600px;text-align:right;top:531.00px;font-size:12.6px;color:#1e1e1e;font-weight:normal;">0,00</div>
<div style="position:absolute;left:1215px;top:532px;width:11px;height:11px;border:1px solid #9a9a9a;box-sizing:border-box;background:#fff"></div>
<div class="t" style="left:1252px;top:530.00px;font-size:13.0px;color:#585858;font-weight:normal;">de</div>
<div class="t" style="left:1302px;top:530.00px;font-size:13.0px;color:#1e1e1e;font-weight:normal;">s.wegs</div>
<div style="position:absolute;left:1352px;top:525px;width:112px;height:25px;overflow:hidden">
<div class="t" style="left:0px;top:5.00px;font-size:13.0px;color:#585858;font-weight:normal;">Weber, Sebastian</div>
</div>
<div class="t" style="left:1471px;top:531.00px;font-size:13.0px;color:#1e1e1e;font-weight:normal;">Mahnsperre s</div>
<div class="t" style="left:1562px;top:530.00px;font-size:13.0px;color:#585858;font-weight:normal;">Wegscheider, Stefan</div>
<div class="t" style="left:-386px;width:600px;text-align:right;top:557.00px;font-size:12.6px;color:#585858;font-weight:normal;">500172</div>
<div class="t" style="left:-286px;width:600px;text-align:right;top:557.00px;font-size:12.6px;color:#585858;font-weight:normal;">10027</div>
<div class="t" style="left:-236px;width:600px;text-align:right;top:557.00px;font-size:12.6px;color:#585858;font-weight:normal;">567</div>
<div class="t" style="left:375.3px;top:556.00px;font-size:13.0px;color:#585858;font-weight:normal;">Adidas</div>
<div class="t" style="left:10px;width:600px;text-align:right;top:557.00px;font-size:12.6px;color:#1e1e1e;font-weight:normal;">1</div>
<div class="t" style="left:621px;top:556.00px;font-size:13.0px;color:#1e1e1e;font-weight:normal;">Mahnstufe1Betref</div>
<div class="t" style="left:242.5px;width:600px;text-align:right;top:557.00px;font-size:12.6px;color:#585858;font-weight:normal;">99.080,23</div>
<div class="t" style="left:358.5px;width:600px;text-align:right;top:557.00px;font-size:12.6px;color:#585858;font-weight:normal;">0,00</div>
<div class="t" style="left:475px;width:600px;text-align:right;top:557.00px;font-size:12.6px;color:#585858;font-weight:normal;">99.080,23</div>
<div class="t" style="left:591px;width:600px;text-align:right;top:557.00px;font-size:12.6px;color:#1e1e1e;font-weight:normal;">0,00</div>
<div style="position:absolute;left:1215px;top:558px;width:11px;height:11px;border:1px solid #9a9a9a;box-sizing:border-box;background:#fff"></div>
<div class="t" style="left:1252px;top:556.00px;font-size:13.0px;color:#585858;font-weight:normal;">de</div>
<div style="position:absolute;left:1352px;top:551px;width:112px;height:25px;overflow:hidden">
<div class="t" style="left:0px;top:5.00px;font-size:13.0px;color:#585858;font-weight:normal;">Wegscheider, Steff</div>
</div>
<div class="t" style="left:1471px;top:557.00px;font-size:13.0px;color:#1e1e1e;font-weight:normal;">Mahnsperre s</div>
<div class="t" style="left:1562px;top:556.00px;font-size:13.0px;color:#585858;font-weight:normal;">Wegscheider, Stefan</div>
<div class="t" style="left:-386px;width:600px;text-align:right;top:583.00px;font-size:12.6px;color:#585858;font-weight:normal;">500173</div>
<div class="t" style="left:-286px;width:600px;text-align:right;top:583.00px;font-size:12.6px;color:#585858;font-weight:normal;">10027</div>
<div class="t" style="left:-236px;width:600px;text-align:right;top:583.00px;font-size:12.6px;color:#585858;font-weight:normal;">567</div>
<div class="t" style="left:375.3px;top:582.00px;font-size:13.0px;color:#585858;font-weight:normal;">Adidas</div>
<div class="t" style="left:10px;width:600px;text-align:right;top:583.00px;font-size:12.6px;color:#1e1e1e;font-weight:normal;">1</div>
<div class="t" style="left:621px;top:582.00px;font-size:13.0px;color:#1e1e1e;font-weight:normal;">Mahnstufe1Betref</div>
<div class="t" style="left:242.5px;width:600px;text-align:right;top:583.00px;font-size:12.6px;color:#585858;font-weight:normal;">8.246,70</div>
<div class="t" style="left:358.5px;width:600px;text-align:right;top:583.00px;font-size:12.6px;color:#585858;font-weight:normal;">0,00</div>
<div class="t" style="left:475px;width:600px;text-align:right;top:583.00px;font-size:12.6px;color:#585858;font-weight:normal;">8.246,70</div>
<div class="t" style="left:591px;width:600px;text-align:right;top:583.00px;font-size:12.6px;color:#1e1e1e;font-weight:normal;">0,00</div>
<div style="position:absolute;left:1215px;top:584px;width:11px;height:11px;border:1px solid #9a9a9a;box-sizing:border-box;background:#fff"></div>
<div class="t" style="left:1252px;top:582.00px;font-size:13.0px;color:#585858;font-weight:normal;">de</div>
<div class="t" style="left:1302px;top:582.00px;font-size:13.0px;color:#1e1e1e;font-weight:normal;">s.wegs</div>
<div style="position:absolute;left:1352px;top:577px;width:112px;height:25px;overflow:hidden">
<div class="t" style="left:0px;top:5.00px;font-size:13.0px;color:#585858;font-weight:normal;">Wegscheider, Steff</div>
</div>
<div class="t" style="left:1471px;top:583.00px;font-size:13.0px;color:#1e1e1e;font-weight:normal;">Mahnsperre s</div>
<div class="t" style="left:1562px;top:582.00px;font-size:13.0px;color:#585858;font-weight:normal;">Wegscheider, Stefan</div>
<div class="t" style="left:-386px;width:600px;text-align:right;top:609.00px;font-size:12.6px;color:#585858;font-weight:normal;">500330</div>
<div class="t" style="left:-286px;width:600px;text-align:right;top:609.00px;font-size:12.6px;color:#585858;font-weight:normal;">10027</div>
<div class="t" style="left:-236px;width:600px;text-align:right;top:609.00px;font-size:12.6px;color:#585858;font-weight:normal;">567</div>
<div class="t" style="left:375.3px;top:608.00px;font-size:13.0px;color:#585858;font-weight:normal;">Adidas</div>
<div class="t" style="left:10px;width:600px;text-align:right;top:609.00px;font-size:12.6px;color:#1e1e1e;font-weight:normal;">1</div>
<div class="t" style="left:621px;top:608.00px;font-size:13.0px;color:#1e1e1e;font-weight:normal;">Mahnstufe1Betref</div>
<div class="t" style="left:242.5px;width:600px;text-align:right;top:609.00px;font-size:12.6px;color:#585858;font-weight:normal;">381.628,61</div>
<div class="t" style="left:358.5px;width:600px;text-align:right;top:609.00px;font-size:12.6px;color:#585858;font-weight:normal;">0,00</div>
<div class="t" style="left:475px;width:600px;text-align:right;top:609.00px;font-size:12.6px;color:#585858;font-weight:normal;">381.628,61</div>
<div class="t" style="left:591px;width:600px;text-align:right;top:609.00px;font-size:12.6px;color:#1e1e1e;font-weight:normal;">0,00</div>
<div style="position:absolute;left:1215px;top:610px;width:11px;height:11px;border:1px solid #9a9a9a;box-sizing:border-box;background:#fff"></div>
<div class="t" style="left:1252px;top:608.00px;font-size:13.0px;color:#585858;font-weight:normal;">de</div>
<div class="t" style="left:1302px;top:608.00px;font-size:13.0px;color:#1e1e1e;font-weight:normal;">s.wegs</div>
<div style="position:absolute;left:1352px;top:603px;width:112px;height:25px;overflow:hidden">
<div class="t" style="left:0px;top:5.00px;font-size:13.0px;color:#585858;font-weight:normal;">Wegscheider, Steff</div>
</div>
<div class="t" style="left:1471px;top:609.00px;font-size:13.0px;color:#1e1e1e;font-weight:normal;">Mahnsperre s</div>
<div class="t" style="left:1562px;top:608.00px;font-size:13.0px;color:#585858;font-weight:normal;">Wegscheider, Stefan</div>
<div class="t" style="left:-386px;width:600px;text-align:right;top:635.00px;font-size:12.6px;color:#585858;font-weight:normal;">500334</div>
<div class="t" style="left:-286px;width:600px;text-align:right;top:635.00px;font-size:12.6px;color:#585858;font-weight:normal;">10027</div>
<div class="t" style="left:-236px;width:600px;text-align:right;top:635.00px;font-size:12.6px;color:#585858;font-weight:normal;">567</div>
<div class="t" style="left:375.3px;top:634.00px;font-size:13.0px;color:#585858;font-weight:normal;">Adidas</div>
<div class="t" style="left:10px;width:600px;text-align:right;top:635.00px;font-size:12.6px;color:#1e1e1e;font-weight:normal;">1</div>
<div class="t" style="left:621px;top:634.00px;font-size:13.0px;color:#1e1e1e;font-weight:normal;">Mahnstufe1Betref</div>
<div class="t" style="left:242.5px;width:600px;text-align:right;top:635.00px;font-size:12.6px;color:#585858;font-weight:normal;">381.628,61</div>
<div class="t" style="left:358.5px;width:600px;text-align:right;top:635.00px;font-size:12.6px;color:#585858;font-weight:normal;">0,00</div>
<div class="t" style="left:475px;width:600px;text-align:right;top:635.00px;font-size:12.6px;color:#585858;font-weight:normal;">381.628,61</div>
<div class="t" style="left:591px;width:600px;text-align:right;top:635.00px;font-size:12.6px;color:#1e1e1e;font-weight:normal;">0,00</div>
<div style="position:absolute;left:1215px;top:636px;width:11px;height:11px;border:1px solid #9a9a9a;box-sizing:border-box;background:#fff"></div>
<div class="t" style="left:1252px;top:634.00px;font-size:13.0px;color:#585858;font-weight:normal;">de</div>
<div class="t" style="left:1302px;top:634.00px;font-size:13.0px;color:#1e1e1e;font-weight:normal;">s.wegs</div>
<div style="position:absolute;left:1352px;top:629px;width:112px;height:25px;overflow:hidden">
<div class="t" style="left:0px;top:5.00px;font-size:13.0px;color:#585858;font-weight:normal;">Weber, Sebastian</div>
</div>
<div class="t" style="left:1471px;top:635.00px;font-size:13.0px;color:#1e1e1e;font-weight:normal;">Mahnsperre s</div>
<div class="t" style="left:1562px;top:634.00px;font-size:13.0px;color:#585858;font-weight:normal;">Wegscheider, Stefan</div>
<div class="t" style="left:-386px;width:600px;text-align:right;top:661.00px;font-size:12.6px;color:#585858;font-weight:normal;">500343</div>
<div class="t" style="left:-286px;width:600px;text-align:right;top:661.00px;font-size:12.6px;color:#585858;font-weight:normal;">10027</div>
<div class="t" style="left:-236px;width:600px;text-align:right;top:661.00px;font-size:12.6px;color:#585858;font-weight:normal;">567</div>
<div class="t" style="left:375.3px;top:660.00px;font-size:13.0px;color:#585858;font-weight:normal;">Adidas</div>
<div class="t" style="left:10px;width:600px;text-align:right;top:661.00px;font-size:12.6px;color:#1e1e1e;font-weight:normal;">1</div>
<div class="t" style="left:621px;top:660.00px;font-size:13.0px;color:#1e1e1e;font-weight:normal;">Mahnstufe1Betref</div>
<div class="t" style="left:242.5px;width:600px;text-align:right;top:661.00px;font-size:12.6px;color:#585858;font-weight:normal;">437,92</div>
<div class="t" style="left:358.5px;width:600px;text-align:right;top:661.00px;font-size:12.6px;color:#585858;font-weight:normal;">0,00</div>
<div class="t" style="left:475px;width:600px;text-align:right;top:661.00px;font-size:12.6px;color:#585858;font-weight:normal;">437,92</div>
<div class="t" style="left:591px;width:600px;text-align:right;top:661.00px;font-size:12.6px;color:#1e1e1e;font-weight:normal;">0,00</div>
<div style="position:absolute;left:1215px;top:662px;width:11px;height:11px;border:1px solid #9a9a9a;box-sizing:border-box;background:#fff"></div>
<div class="t" style="left:1252px;top:660.00px;font-size:13.0px;color:#585858;font-weight:normal;">de</div>
<div class="t" style="left:1302px;top:660.00px;font-size:13.0px;color:#1e1e1e;font-weight:normal;">s.wegs</div>
<div style="position:absolute;left:1352px;top:655px;width:112px;height:25px;overflow:hidden">
<div class="t" style="left:0px;top:5.00px;font-size:13.0px;color:#585858;font-weight:normal;">Wegscheider, Steff</div>
</div>
<div class="t" style="left:1471px;top:661.00px;font-size:13.0px;color:#1e1e1e;font-weight:normal;">Mahnsperre s</div>
<div class="t" style="left:1562px;top:660.00px;font-size:13.0px;color:#585858;font-weight:normal;">Graf, Christofer</div>
<div class="t" style="left:-386px;width:600px;text-align:right;top:687.00px;font-size:12.6px;color:#585858;font-weight:normal;">500393</div>
<div class="t" style="left:-286px;width:600px;text-align:right;top:687.00px;font-size:12.6px;color:#585858;font-weight:normal;">10052</div>
<div class="t" style="left:-236px;width:600px;text-align:right;top:687.00px;font-size:12.6px;color:#585858;font-weight:normal;">607</div>
<div class="t" style="left:375.3px;top:686.00px;font-size:13.0px;color:#585858;font-weight:normal;">VFB Stuttgart</div>
<div class="t" style="left:10px;width:600px;text-align:right;top:687.00px;font-size:12.6px;color:#1e1e1e;font-weight:normal;">1</div>
<div class="t" style="left:621px;top:686.00px;font-size:13.0px;color:#1e1e1e;font-weight:normal;">Mahnstufe1Betref</div>
<div class="t" style="left:242.5px;width:600px;text-align:right;top:687.00px;font-size:12.6px;color:#585858;font-weight:normal;">214,20</div>
<div class="t" style="left:358.5px;width:600px;text-align:right;top:687.00px;font-size:12.6px;color:#585858;font-weight:normal;">0,00</div>
<div class="t" style="left:475px;width:600px;text-align:right;top:687.00px;font-size:12.6px;color:#585858;font-weight:normal;">214,20</div>
<div class="t" style="left:591px;width:600px;text-align:right;top:687.00px;font-size:12.6px;color:#1e1e1e;font-weight:normal;">0,00</div>
<div style="position:absolute;left:1215px;top:688px;width:11px;height:11px;border:1px solid #9a9a9a;box-sizing:border-box;background:#fff"></div>
<div class="t" style="left:1252px;top:686.00px;font-size:13.0px;color:#585858;font-weight:normal;">de</div>
<div class="t" style="left:1302px;top:686.00px;font-size:13.0px;color:#1e1e1e;font-weight:normal;">n.welt</div>
<div style="position:absolute;left:1352px;top:681px;width:112px;height:25px;overflow:hidden">
<div class="t" style="left:0px;top:5.00px;font-size:13.0px;color:#585858;font-weight:normal;">Welte, Nikolas</div>
</div>
<div class="t" style="left:1471px;top:687.00px;font-size:13.0px;color:#1e1e1e;font-weight:normal;">Mahnsperre s</div>
<div class="t" style="left:1562px;top:686.00px;font-size:13.0px;color:#585858;font-weight:normal;">Welte, Nikolas</div>
<div class="t" style="left:-386px;width:600px;text-align:right;top:713.00px;font-size:12.6px;color:#585858;font-weight:normal;">500208</div>
<div class="t" style="left:-286px;width:600px;text-align:right;top:713.00px;font-size:12.6px;color:#585858;font-weight:normal;">10053</div>
<div class="t" style="left:-236px;width:600px;text-align:right;top:713.00px;font-size:12.6px;color:#585858;font-weight:normal;">609</div>
<div class="t" style="left:375.3px;top:712.00px;font-size:13.0px;color:#585858;font-weight:normal;">FCB</div>
<div class="t" style="left:10px;width:600px;text-align:right;top:713.00px;font-size:12.6px;color:#1e1e1e;font-weight:normal;">1</div>
<div class="t" style="left:621px;top:712.00px;font-size:13.0px;color:#1e1e1e;font-weight:normal;">Mahnstufe1Betref</div>
<div class="t" style="left:242.5px;width:600px;text-align:right;top:713.00px;font-size:12.6px;color:#585858;font-weight:normal;">95.403,49</div>
<div class="t" style="left:358.5px;width:600px;text-align:right;top:713.00px;font-size:12.6px;color:#585858;font-weight:normal;">0,00</div>
<div class="t" style="left:475px;width:600px;text-align:right;top:713.00px;font-size:12.6px;color:#585858;font-weight:normal;">95.403,49</div>
<div class="t" style="left:591px;width:600px;text-align:right;top:713.00px;font-size:12.6px;color:#1e1e1e;font-weight:normal;">0,00</div>
<div style="position:absolute;left:1215px;top:714px;width:11px;height:11px;border:1px solid #9a9a9a;box-sizing:border-box;background:#fff"></div>
<div class="t" style="left:1252px;top:712.00px;font-size:13.0px;color:#585858;font-weight:normal;">de</div>
<div style="position:absolute;left:1352px;top:707px;width:112px;height:25px;overflow:hidden">
<div class="t" style="left:0px;top:5.00px;font-size:13.0px;color:#585858;font-weight:normal;">Welte, Nikolas</div>
</div>
<div class="t" style="left:1471px;top:713.00px;font-size:13.0px;color:#1e1e1e;font-weight:normal;">Mahnsperre s</div>
<div class="t" style="left:1562px;top:712.00px;font-size:13.0px;color:#585858;font-weight:normal;">Welte, Nikolas</div>
<div class="t" style="left:-386px;width:600px;text-align:right;top:739.00px;font-size:12.6px;color:#585858;font-weight:normal;">500210</div>
<div class="t" style="left:-286px;width:600px;text-align:right;top:739.00px;font-size:12.6px;color:#585858;font-weight:normal;">10053</div>
<div class="t" style="left:-236px;width:600px;text-align:right;top:739.00px;font-size:12.6px;color:#585858;font-weight:normal;">609</div>
<div class="t" style="left:375.3px;top:738.00px;font-size:13.0px;color:#585858;font-weight:normal;">FCB</div>
<div class="t" style="left:10px;width:600px;text-align:right;top:739.00px;font-size:12.6px;color:#1e1e1e;font-weight:normal;">1</div>
<div class="t" style="left:621px;top:738.00px;font-size:13.0px;color:#1e1e1e;font-weight:normal;">Mahnstufe1Betref</div>
<div class="t" style="left:242.5px;width:600px;text-align:right;top:739.00px;font-size:12.6px;color:#585858;font-weight:normal;">95.403,49</div>
<div class="t" style="left:358.5px;width:600px;text-align:right;top:739.00px;font-size:12.6px;color:#585858;font-weight:normal;">0,00</div>
<div class="t" style="left:475px;width:600px;text-align:right;top:739.00px;font-size:12.6px;color:#585858;font-weight:normal;">95.403,49</div>
<div class="t" style="left:591px;width:600px;text-align:right;top:739.00px;font-size:12.6px;color:#1e1e1e;font-weight:normal;">0,00</div>
<div style="position:absolute;left:1215px;top:740px;width:11px;height:11px;border:1px solid #9a9a9a;box-sizing:border-box;background:#fff"></div>
<div class="t" style="left:1252px;top:738.00px;font-size:13.0px;color:#585858;font-weight:normal;">de</div>
<div style="position:absolute;left:1352px;top:733px;width:112px;height:25px;overflow:hidden">
<div class="t" style="left:0px;top:5.00px;font-size:13.0px;color:#585858;font-weight:normal;">Welte, Nikolas</div>
</div>
<div class="t" style="left:1471px;top:739.00px;font-size:13.0px;color:#1e1e1e;font-weight:normal;">Mahnsperre s</div>
<div class="t" style="left:1562px;top:738.00px;font-size:13.0px;color:#585858;font-weight:normal;">Welte, Nikolas</div>
<div class="t" style="left:-386px;width:600px;text-align:right;top:765.00px;font-size:12.6px;color:#585858;font-weight:normal;">500336</div>
<div class="t" style="left:-286px;width:600px;text-align:right;top:765.00px;font-size:12.6px;color:#585858;font-weight:normal;">10053</div>
<div class="t" style="left:-236px;width:600px;text-align:right;top:765.00px;font-size:12.6px;color:#585858;font-weight:normal;">609</div>
<div class="t" style="left:375.3px;top:764.00px;font-size:13.0px;color:#585858;font-weight:normal;">FCB</div>
<div class="t" style="left:10px;width:600px;text-align:right;top:765.00px;font-size:12.6px;color:#1e1e1e;font-weight:normal;">3</div>
<div class="t" style="left:621px;top:764.00px;font-size:13.0px;color:#1e1e1e;font-weight:normal;">2. Mahnung</div>
<div class="t" style="left:242.5px;width:600px;text-align:right;top:765.00px;font-size:12.6px;color:#585858;font-weight:normal;">3.642,00</div>
<div class="t" style="left:358.5px;width:600px;text-align:right;top:765.00px;font-size:12.6px;color:#585858;font-weight:normal;">0,00</div>
<div class="t" style="left:475px;width:600px;text-align:right;top:765.00px;font-size:12.6px;color:#585858;font-weight:normal;">3.642,00</div>
<div class="t" style="left:591px;width:600px;text-align:right;top:765.00px;font-size:12.6px;color:#1e1e1e;font-weight:normal;">0,00</div>
<div style="position:absolute;left:1215px;top:766px;width:11px;height:11px;border:1px solid #9a9a9a;box-sizing:border-box;background:#fff"></div>
<div class="t" style="left:1252px;top:764.00px;font-size:13.0px;color:#585858;font-weight:normal;">de</div>
<div style="position:absolute;left:1352px;top:759px;width:112px;height:25px;overflow:hidden">
<div class="t" style="left:0px;top:5.00px;font-size:13.0px;color:#585858;font-weight:normal;">Wegscheider, Steff</div>
</div>
<div class="t" style="left:1471px;top:765.00px;font-size:13.0px;color:#1e1e1e;font-weight:normal;">Mahnsperre s</div>
<div class="t" style="left:1562px;top:764.00px;font-size:13.0px;color:#585858;font-weight:normal;">Welte, Nikolas</div>
<div class="t" style="left:-386px;width:600px;text-align:right;top:792.00px;font-size:12.6px;color:#585858;font-weight:normal;">500337</div>
<div class="t" style="left:-286px;width:600px;text-align:right;top:792.00px;font-size:12.6px;color:#585858;font-weight:normal;">10053</div>
<div class="t" style="left:-236px;width:600px;text-align:right;top:792.00px;font-size:12.6px;color:#585858;font-weight:normal;">609</div>
<div class="t" style="left:375.3px;top:791.00px;font-size:13.0px;color:#585858;font-weight:normal;">FCB</div>
<div class="t" style="left:10px;width:600px;text-align:right;top:792.00px;font-size:12.6px;color:#1e1e1e;font-weight:normal;">3</div>
<div class="t" style="left:621px;top:791.00px;font-size:13.0px;color:#1e1e1e;font-weight:normal;">2. Mahnung</div>
<div class="t" style="left:242.5px;width:600px;text-align:right;top:792.00px;font-size:12.6px;color:#585858;font-weight:normal;">3.642,00</div>
<div class="t" style="left:358.5px;width:600px;text-align:right;top:792.00px;font-size:12.6px;color:#585858;font-weight:normal;">0,00</div>
<div class="t" style="left:475px;width:600px;text-align:right;top:792.00px;font-size:12.6px;color:#585858;font-weight:normal;">3.642,00</div>
<div class="t" style="left:591px;width:600px;text-align:right;top:792.00px;font-size:12.6px;color:#1e1e1e;font-weight:normal;">0,00</div>
<div style="position:absolute;left:1215px;top:793px;width:11px;height:11px;border:1px solid #9a9a9a;box-sizing:border-box;background:#fff"></div>
<div class="t" style="left:1252px;top:791.00px;font-size:13.0px;color:#585858;font-weight:normal;">de</div>
<div style="position:absolute;left:1352px;top:786px;width:112px;height:25px;overflow:hidden">
<div class="t" style="left:0px;top:5.00px;font-size:13.0px;color:#585858;font-weight:normal;">Wegscheider, Steff</div>
</div>
<div class="t" style="left:1471px;top:791.00px;font-size:13.0px;color:#1e1e1e;font-weight:normal;">Mahnsperre s</div>
<div class="t" style="left:1562px;top:791.00px;font-size:13.0px;color:#585858;font-weight:normal;">Welte, Nikolas</div>
<div class="t" style="left:-386px;width:600px;text-align:right;top:818.00px;font-size:12.6px;color:#585858;font-weight:normal;">500341</div>
<div class="t" style="left:-286px;width:600px;text-align:right;top:818.00px;font-size:12.6px;color:#585858;font-weight:normal;">10053</div>
<div class="t" style="left:-236px;width:600px;text-align:right;top:818.00px;font-size:12.6px;color:#585858;font-weight:normal;">609</div>
<div class="t" style="left:375.3px;top:817.00px;font-size:13.0px;color:#585858;font-weight:normal;">FCB</div>
<div class="t" style="left:10px;width:600px;text-align:right;top:818.00px;font-size:12.6px;color:#1e1e1e;font-weight:normal;">2</div>
<div class="t" style="left:621px;top:817.00px;font-size:13.0px;color:#1e1e1e;font-weight:normal;">1. Mahnung</div>
<div class="t" style="left:242.5px;width:600px;text-align:right;top:818.00px;font-size:12.6px;color:#585858;font-weight:normal;">786,59</div>
<div class="t" style="left:358.5px;width:600px;text-align:right;top:818.00px;font-size:12.6px;color:#585858;font-weight:normal;">0,00</div>
<div class="t" style="left:475px;width:600px;text-align:right;top:818.00px;font-size:12.6px;color:#585858;font-weight:normal;">786,59</div>
<div class="t" style="left:591px;width:600px;text-align:right;top:818.00px;font-size:12.6px;color:#1e1e1e;font-weight:normal;">0,00</div>
<div style="position:absolute;left:1215px;top:819px;width:11px;height:11px;border:1px solid #9a9a9a;box-sizing:border-box;background:#fff"></div>
<div class="t" style="left:1252px;top:817.00px;font-size:13.0px;color:#585858;font-weight:normal;">de</div>
<div style="position:absolute;left:1352px;top:812px;width:112px;height:25px;overflow:hidden">
<div class="t" style="left:0px;top:5.00px;font-size:13.0px;color:#585858;font-weight:normal;">Wegscheider, Steff</div>
</div>
<div class="t" style="left:1471px;top:817.00px;font-size:13.0px;color:#1e1e1e;font-weight:normal;">Mahnsperre s</div>
<div class="t" style="left:1562px;top:817.00px;font-size:13.0px;color:#585858;font-weight:normal;">Welte, Nikolas</div>
<div class="t" style="left:-386px;width:600px;text-align:right;top:844.00px;font-size:12.6px;color:#585858;font-weight:normal;">500350</div>
<div class="t" style="left:-286px;width:600px;text-align:right;top:844.00px;font-size:12.6px;color:#585858;font-weight:normal;">10053</div>
<div class="t" style="left:-236px;width:600px;text-align:right;top:844.00px;font-size:12.6px;color:#585858;font-weight:normal;">609</div>
<div class="t" style="left:375.3px;top:843.00px;font-size:13.0px;color:#585858;font-weight:normal;">FCB</div>
<div class="t" style="left:10px;width:600px;text-align:right;top:844.00px;font-size:12.6px;color:#1e1e1e;font-weight:normal;">1</div>
<div class="t" style="left:621px;top:843.00px;font-size:13.0px;color:#1e1e1e;font-weight:normal;">Mahnstufe1Betref</div>
<div class="t" style="left:242.5px;width:600px;text-align:right;top:844.00px;font-size:12.6px;color:#585858;font-weight:normal;">1.573,18</div>
<div class="t" style="left:358.5px;width:600px;text-align:right;top:844.00px;font-size:12.6px;color:#585858;font-weight:normal;">0,00</div>
<div class="t" style="left:475px;width:600px;text-align:right;top:844.00px;font-size:12.6px;color:#585858;font-weight:normal;">1.573,18</div>
<div class="t" style="left:591px;width:600px;text-align:right;top:844.00px;font-size:12.6px;color:#1e1e1e;font-weight:normal;">0,00</div>
<div style="position:absolute;left:1215px;top:845px;width:11px;height:11px;border:1px solid #9a9a9a;box-sizing:border-box;background:#fff"></div>
<div class="t" style="left:1252px;top:843.00px;font-size:13.0px;color:#585858;font-weight:normal;">de</div>
<div style="position:absolute;left:1352px;top:838px;width:112px;height:25px;overflow:hidden">
<div class="t" style="left:0px;top:5.00px;font-size:13.0px;color:#585858;font-weight:normal;">Wegscheider, Steff</div>
</div>
<div class="t" style="left:1471px;top:843.00px;font-size:13.0px;color:#1e1e1e;font-weight:normal;">Mahnsperre s</div>
<div class="t" style="left:1562px;top:843.00px;font-size:13.0px;color:#585858;font-weight:normal;">Welte, Nikolas</div>
<div class="t" style="left:-386px;width:600px;text-align:right;top:870.00px;font-size:12.6px;color:#585858;font-weight:normal;">500352</div>
<div class="t" style="left:-286px;width:600px;text-align:right;top:870.00px;font-size:12.6px;color:#585858;font-weight:normal;">10053</div>
<div class="t" style="left:-236px;width:600px;text-align:right;top:870.00px;font-size:12.6px;color:#585858;font-weight:normal;">609</div>
<div class="t" style="left:375.3px;top:869.00px;font-size:13.0px;color:#585858;font-weight:normal;">FCB</div>
<div class="t" style="left:10px;width:600px;text-align:right;top:870.00px;font-size:12.6px;color:#1e1e1e;font-weight:normal;">1</div>
<div class="t" style="left:621px;top:869.00px;font-size:13.0px;color:#1e1e1e;font-weight:normal;">Mahnstufe1Betref</div>
<div class="t" style="left:242.5px;width:600px;text-align:right;top:870.00px;font-size:12.6px;color:#585858;font-weight:normal;">2,38</div>
<div class="t" style="left:358.5px;width:600px;text-align:right;top:870.00px;font-size:12.6px;color:#585858;font-weight:normal;">0,00</div>
<div class="t" style="left:475px;width:600px;text-align:right;top:870.00px;font-size:12.6px;color:#585858;font-weight:normal;">2,38</div>
<div class="t" style="left:591px;width:600px;text-align:right;top:870.00px;font-size:12.6px;color:#1e1e1e;font-weight:normal;">0,00</div>
<div style="position:absolute;left:1215px;top:871px;width:11px;height:11px;border:1px solid #9a9a9a;box-sizing:border-box;background:#fff"></div>
<div class="t" style="left:1252px;top:869.00px;font-size:13.0px;color:#585858;font-weight:normal;">de</div>
<div style="position:absolute;left:1352px;top:864px;width:112px;height:25px;overflow:hidden">
<div class="t" style="left:0px;top:5.00px;font-size:13.0px;color:#585858;font-weight:normal;">Wegscheider, Steff</div>
</div>
<div class="t" style="left:1471px;top:869.00px;font-size:13.0px;color:#1e1e1e;font-weight:normal;">Mahnsperre s</div>
<div class="t" style="left:1562px;top:869.00px;font-size:13.0px;color:#585858;font-weight:normal;">Welte, Nikolas</div>
<div class="t" style="left:-386px;width:600px;text-align:right;top:896.00px;font-size:12.6px;color:#585858;font-weight:normal;">500353</div>
<div class="t" style="left:-286px;width:600px;text-align:right;top:896.00px;font-size:12.6px;color:#585858;font-weight:normal;">10053</div>
<div class="t" style="left:-236px;width:600px;text-align:right;top:896.00px;font-size:12.6px;color:#585858;font-weight:normal;">609</div>
<div class="t" style="left:375.3px;top:895.00px;font-size:13.0px;color:#585858;font-weight:normal;">FCB</div>
<div class="t" style="left:10px;width:600px;text-align:right;top:896.00px;font-size:12.6px;color:#1e1e1e;font-weight:normal;">1</div>
<div class="t" style="left:621px;top:895.00px;font-size:13.0px;color:#1e1e1e;font-weight:normal;">Mahnstufe1Betref</div>
<div class="t" style="left:242.5px;width:600px;text-align:right;top:896.00px;font-size:12.6px;color:#585858;font-weight:normal;">83.300,00</div>
<div class="t" style="left:358.5px;width:600px;text-align:right;top:896.00px;font-size:12.6px;color:#585858;font-weight:normal;">0,00</div>
<div class="t" style="left:475px;width:600px;text-align:right;top:896.00px;font-size:12.6px;color:#585858;font-weight:normal;">83.300,00</div>
<div class="t" style="left:591px;width:600px;text-align:right;top:896.00px;font-size:12.6px;color:#1e1e1e;font-weight:normal;">0,00</div>
<div style="position:absolute;left:1215px;top:897px;width:11px;height:11px;border:1px solid #9a9a9a;box-sizing:border-box;background:#fff"></div>
<div class="t" style="left:1252px;top:895.00px;font-size:13.0px;color:#585858;font-weight:normal;">de</div>
<div style="position:absolute;left:1352px;top:890px;width:112px;height:25px;overflow:hidden">
<div class="t" style="left:0px;top:5.00px;font-size:13.0px;color:#585858;font-weight:normal;">Wegscheider, Steff</div>
</div>
<div class="t" style="left:1471px;top:895.00px;font-size:13.0px;color:#1e1e1e;font-weight:normal;">Mahnsperre s</div>
<div class="t" style="left:1562px;top:895.00px;font-size:13.0px;color:#585858;font-weight:normal;">Welte, Nikolas</div>
<div class="t" style="left:-386px;width:600px;text-align:right;top:922.00px;font-size:12.6px;color:#585858;font-weight:normal;">500355</div>
<div class="t" style="left:-286px;width:600px;text-align:right;top:922.00px;font-size:12.6px;color:#585858;font-weight:normal;">10053</div>
<div class="t" style="left:-236px;width:600px;text-align:right;top:922.00px;font-size:12.6px;color:#585858;font-weight:normal;">609</div>
<div class="t" style="left:375.3px;top:921.00px;font-size:13.0px;color:#585858;font-weight:normal;">FCB</div>
<div class="t" style="left:10px;width:600px;text-align:right;top:922.00px;font-size:12.6px;color:#1e1e1e;font-weight:normal;">1</div>
<div class="t" style="left:621px;top:921.00px;font-size:13.0px;color:#1e1e1e;font-weight:normal;">Mahnstufe1Betref</div>
<div class="t" style="left:242.5px;width:600px;text-align:right;top:922.00px;font-size:12.6px;color:#585858;font-weight:normal;">119,00</div>
<div class="t" style="left:358.5px;width:600px;text-align:right;top:922.00px;font-size:12.6px;color:#585858;font-weight:normal;">0,00</div>
<div class="t" style="left:475px;width:600px;text-align:right;top:922.00px;font-size:12.6px;color:#585858;font-weight:normal;">119,00</div>
<div class="t" style="left:591px;width:600px;text-align:right;top:922.00px;font-size:12.6px;color:#1e1e1e;font-weight:normal;">0,00</div>
<div style="position:absolute;left:1215px;top:923px;width:11px;height:11px;border:1px solid #9a9a9a;box-sizing:border-box;background:#fff"></div>
<div class="t" style="left:1252px;top:921.00px;font-size:13.0px;color:#585858;font-weight:normal;">de</div>
<div style="position:absolute;left:1352px;top:916px;width:112px;height:25px;overflow:hidden">
<div class="t" style="left:0px;top:5.00px;font-size:13.0px;color:#585858;font-weight:normal;">Wegscheider, Steff</div>
</div>
<div class="t" style="left:1471px;top:921.00px;font-size:13.0px;color:#1e1e1e;font-weight:normal;">Mahnsperre s</div>
<div class="t" style="left:1562px;top:921.00px;font-size:13.0px;color:#585858;font-weight:normal;">Sachbearbeiter</div>
<div class="t" style="left:-386px;width:600px;text-align:right;top:948.00px;font-size:12.6px;color:#585858;font-weight:normal;">500356</div>
<div class="t" style="left:-286px;width:600px;text-align:right;top:948.00px;font-size:12.6px;color:#585858;font-weight:normal;">10053</div>
<div class="t" style="left:-236px;width:600px;text-align:right;top:948.00px;font-size:12.6px;color:#585858;font-weight:normal;">609</div>
<div class="t" style="left:375.3px;top:947.00px;font-size:13.0px;color:#585858;font-weight:normal;">FCB</div>
<div class="t" style="left:10px;width:600px;text-align:right;top:948.00px;font-size:12.6px;color:#1e1e1e;font-weight:normal;">3</div>
<div class="t" style="left:621px;top:947.00px;font-size:13.0px;color:#1e1e1e;font-weight:normal;">2. Mahnung</div>
<div class="t" style="left:242.5px;width:600px;text-align:right;top:948.00px;font-size:12.6px;color:#585858;font-weight:normal;">119,00</div>
<div class="t" style="left:358.5px;width:600px;text-align:right;top:948.00px;font-size:12.6px;color:#585858;font-weight:normal;">0,00</div>
<div class="t" style="left:475px;width:600px;text-align:right;top:948.00px;font-size:12.6px;color:#585858;font-weight:normal;">119,00</div>
<div class="t" style="left:591px;width:600px;text-align:right;top:948.00px;font-size:12.6px;color:#1e1e1e;font-weight:normal;">0,00</div>
<div style="position:absolute;left:1215px;top:949px;width:11px;height:11px;border:1px solid #9a9a9a;box-sizing:border-box;background:#fff"></div>
<div class="t" style="left:1252px;top:947.00px;font-size:13.0px;color:#585858;font-weight:normal;">de</div>
<div style="position:absolute;left:1352px;top:942px;width:112px;height:25px;overflow:hidden">
<div class="t" style="left:0px;top:5.00px;font-size:13.0px;color:#585858;font-weight:normal;">Wegscheider, Steff</div>
</div>
<div class="t" style="left:1471px;top:947.00px;font-size:13.0px;color:#1e1e1e;font-weight:normal;">Mahnsperre s</div>
<div class="t" style="left:1562px;top:947.00px;font-size:13.0px;color:#585858;font-weight:normal;">Sachbearbeiter</div>
<div style="position:absolute;left:368px;top:550px;width:197px;height:27px;border:1.5px solid #ff9d76;box-sizing:border-box"></div>
<svg style="position:absolute;left:87px;top:558px;" width="6" height="10" viewBox="0 0 6 10"><path d="M0 0 L5.5 4.8 L0 9.6 Z" fill="#1a56a8"/></svg>
</div>
<div style="position:absolute;left:1623px;top:307px;width:17px;height:665px;background:#f4f4f4"></div>
<div style="position:absolute;left:1623px;top:307px;width:17px;height:17px;background:#f7f7f7;border:1px solid #b5b5b5;box-sizing:border-box"></div>
<div style="position:absolute;left:1627.5px;top:312px;width:0;height:0;border-left:4px solid transparent;border-right:4px solid transparent;border-bottom:4px solid #707070"></div>
<div style="position:absolute;left:1623px;top:324px;width:17px;height:79px;background:#ffffff;border:1px solid #b5b5b5;box-sizing:border-box"></div>
<div style="position:absolute;left:1623px;top:955px;width:17px;height:17px;background:#f7f7f7;border:1px solid #b5b5b5;box-sizing:border-box"></div>
<div style="position:absolute;left:1627.5px;top:961px;width:0;height:0;border-left:4.0px solid transparent;border-right:4.0px solid transparent;border-top:4.5px solid #707070"></div>
<div style="position:absolute;left:79px;top:972px;width:1561px;height:17px;background:#f7f7f7"></div>
<div style="position:absolute;left:80px;top:972px;width:17px;height:17px;background:#f7f7f7;border:1px solid #b5b5b5;box-sizing:border-box"></div>
<div style="position:absolute;left:85.5px;top:976.5px;width:0;height:0;border-top:4px solid transparent;border-bottom:4px solid transparent;border-right:4px solid #707070"></div>
<div style="position:absolute;left:96px;top:972px;width:1316px;height:17px;background:#ffffff;border:1px solid #b5b5b5;box-sizing:border-box"></div>
<div style="position:absolute;left:1606px;top:972px;width:17px;height:17px;background:#f7f7f7;border:1px solid #b5b5b5;box-sizing:border-box"></div>
<div style="position:absolute;left:1612.5px;top:976.5px;width:0;height:0;border-top:4px solid transparent;border-bottom:4px solid transparent;border-left:4px solid #707070"></div>
<div style="position:absolute;left:1623px;top:972px;width:17px;height:17px;background:#ebebeb"></div>
<div style="position:absolute;left:78px;top:989px;width:1564px;height:1px;background:#c9d5e3"></div>
<div style="position:absolute;left:1640px;top:271px;width:1px;height:719px;background:#c9d5e3"></div>
<div style="position:absolute;left:78px;top:990px;width:1564px;height:32px;background:#f3f3f3"></div>
<div style="position:absolute;left:186px;top:991px;width:121px;height:27px;background:#f9f9f9"></div>
<svg style="position:absolute;left:84px;top:998px;" width="20" height="17" viewBox="0 0 20 17"><rect x="0.6" y="0.6" width="18.8" height="15.6" stroke="#2b5c9f" stroke-width="1.1" fill="none"/><path d="M0.6 3.4 H19.4" stroke="#2b5c9f" stroke-width="1"/><path d="M11.3 9 L17 14.5 M17 9 L11.3 14.5" stroke="#4f6fa8" stroke-width="0.9"/></svg>
<div class="t" style="left:110.2px;top:1001.00px;font-size:12.4px;color:#222;font-weight:normal;;letter-spacing:0.068px">Office Heute</div>
<svg style="position:absolute;left:189px;top:994px;" width="21" height="21" viewBox="0 0 21 21"><rect x="11.5" y="0.6" width="6.2" height="4.3" stroke="#2b5c9f" stroke-width="1.1" fill="none"/><path d="M14.6 5 V7" stroke="#2b5c9f" stroke-width="1"/><path d="M0.6 17.6 V7.3 H19.6 V17.6" stroke="#2b5c9f" stroke-width="1.1" fill="none"/><rect x="0.6" y="17.6" width="19" height="2.8" stroke="#2b5c9f" stroke-width="1.1" fill="none"/><path d="M8 19 H11" stroke="#555" stroke-width="0.8"/><path d="M3 15.8 H8.5 M3.6 15.8 V11 H7.8 V15.8" stroke="#2b5c9f" stroke-width="1.1" fill="none"/><path d="M11.5 11 h1 M13.8 11 h1 M16.1 11 h1 M11.5 13.2 h1 M13.8 13.2 h1 M16.1 13.2 h1 M11.5 15.4 h1 M13.8 15.4 h1 M16.1 15.4 h1" stroke="#7a9ad0" stroke-width="1"/></svg>
<div class="t" style="left:216.2px;top:1001.00px;font-size:12.4px;color:#3a7bd0;font-weight:normal;;letter-spacing:0.088px">OP-Verwaltung</div>
<svg style="position:absolute;left:1628px;top:1001px;" width="10" height="9" viewBox="0 0 10 9"><path d="M1 1 L9 8 M9 1 L1 8" stroke="#000" stroke-width="2"/></svg>
<div style="position:absolute;left:1642px;top:247px;width:161px;height:775px;background:#f4f4f4"></div>
<div style="position:absolute;left:1642px;top:247px;width:161px;height:219px;background:#f9f9f9"></div>
<div style="position:absolute;left:1641px;top:247px;width:2px;height:775px;background:#c0c0c0"></div>
<svg style="position:absolute;left:1647px;top:249px;" width="155" height="6" viewBox="0 0 155 6"><defs><pattern id="gp" width="4" height="4" patternUnits="userSpaceOnUse"><rect x="0" y="0" width="1" height="1" fill="#b4b4b4"/><rect x="2" y="2" width="1" height="1" fill="#b4b4b4"/><rect x="1" y="1" width="1" height="1" fill="#ffffff"/><rect x="3" y="3" width="1" height="1" fill="#ffffff"/></pattern></defs><rect x="0" y="0" width="155" height="5" fill="url(#gp)"/></svg>
<svg style="position:absolute;left:1708px;top:269px;" width="31" height="26" viewBox="0 0 31 26"><ellipse cx="14" cy="4.5" rx="13" ry="3.8" stroke="#8e8e8e" stroke-width="1.3" fill="none"/><path d="M1 4.5 V21 C1 23 7 25 14 25 C17 25 19 24.8 20 24.5 M27 4.5 V13" stroke="#8e8e8e" stroke-width="1.3" fill="none"/><path d="M1 13 C3 16 10 17 17 16.5" stroke="#8e8e8e" stroke-width="1.3" fill="none"/><path d="M18 25 L20 19.5 L28.5 11 L31 13.5 L22.5 22 Z" stroke="#8e8e8e" stroke-width="1.3" fill="none"/></svg>
<div class="t" style="left:1684.2px;top:304.00px;font-size:12.5px;color:#8a8a8a;font-weight:normal;;letter-spacing:0.237px">OPs erledigen</div>
<svg style="position:absolute;left:1714px;top:331px;" width="19" height="26" viewBox="0 0 19 26"><path d="M0.7 0.7 H12.5 L17.5 5.7 V24.5 H0.7 Z" stroke="#2f6aa8" stroke-width="1.3" fill="none"/><path d="M12.5 0.7 V5.7 H17.5" stroke="#2f6aa8" stroke-width="1.1" fill="none"/><path d="M4 10 H14 M4 14 H14 M4 18 H10" stroke="#3f7fc4" stroke-width="1.3"/></svg>
<div class="t" style="left:1649.3px;top:365.00px;font-size:13.05px;color:#262626;font-weight:normal;;letter-spacing:0.056px">Mahnvorschläge erstellen</div>
<svg style="position:absolute;left:1711px;top:393px;" width="24" height="26" viewBox="0 0 24 26"><path d="M9 14 V6 C6 3 8 0.8 12 0.8 C16 0.8 18 3 15 6 V14" stroke="#3557c0" stroke-width="1.4" fill="none"/><rect x="1" y="14.5" width="22" height="5" stroke="#3557c0" stroke-width="1.5" fill="none"/><rect x="4" y="20" width="16" height="4" stroke="#3c8fd8" stroke-width="1.3" fill="none"/></svg>
<div class="t" style="left:1653.2px;top:427.00px;font-size:13.05px;color:#262626;font-weight:normal;;letter-spacing:-0.042px">Mahnungen abschließen</div>
<svg style="position:absolute;left:1793px;top:453px;" width="7" height="7" viewBox="0 0 7 7"><path d="M0.6 0 V6.5" stroke="#111" stroke-width="1.2"/><path d="M2.5 0 L6.3 3.2 L2.5 6.5 Z" fill="#111"/></svg>
<div style="position:absolute;left:56px;top:1021px;width:1747px;height:1px;background:#7a7a7a"></div>
<div style="position:absolute;left:56px;top:1022px;width:1747px;height:24px;background:#1457a0"></div>
<div style="position:absolute;left:56px;top:1022px;width:1747px;height:1px;background:#0a4c98"></div>
<div style="position:absolute;left:65px;top:1024px;width:2px;height:19px;background:#8fb0d8"></div>
<div style="position:absolute;left:267px;top:1024px;width:2px;height:19px;background:#8fb0d8"></div>
<div style="position:absolute;left:420px;top:1024px;width:2px;height:19px;background:#8fb0d8"></div>
<div style="position:absolute;left:917px;top:1024px;width:2px;height:19px;background:#8fb0d8"></div>
<div style="position:absolute;left:1019px;top:1024px;width:2px;height:19px;background:#8fb0d8"></div>
<div style="position:absolute;left:1518px;top:1024px;width:2px;height:19px;background:#8fb0d8"></div>
<div style="position:absolute;left:1555px;top:1024px;width:2px;height:19px;background:#8fb0d8"></div>
<div style="position:absolute;left:1594px;top:1024px;width:2px;height:19px;background:#8fb0d8"></div>
<div style="position:absolute;left:1628px;top:1024px;width:2px;height:19px;background:#8fb0d8"></div>
<div style="position:absolute;left:1736px;top:1024px;width:2px;height:19px;background:#8fb0d8"></div>
<div style="position:absolute;left:1799px;top:1024px;width:2px;height:19px;background:#8fb0d8"></div>
<div class="t" style="left:70.1px;top:1029.00px;font-size:12.5px;color:#ffffff;font-weight:normal;;letter-spacing:0.274px">Bearbeitung</div>
<div class="t" style="left:273.2px;top:1029.00px;font-size:12.5px;color:#ffffff;font-weight:normal;;letter-spacing:-0.016px">alle Sätze</div>
<div class="t" style="left:425.6px;top:1029.00px;font-size:12.55px;color:#ffffff;font-weight:normal;;letter-spacing:-0.019px">s.wegscheider - PL LIVEMANDANT</div>
<div class="t" style="left:1524px;top:1029.00px;font-size:12.5px;color:#a9c0de;font-weight:normal;;letter-spacing:-1.637px">FEST</div>
<div class="t" style="left:1561.9px;top:1029.00px;font-size:12.5px;color:#ffffff;font-weight:bold;;letter-spacing:1.023px">NUM</div>
<div class="t" style="left:1599.5px;top:1029.00px;font-size:12.5px;color:#9bb5d6;font-weight:normal;;letter-spacing:0.250px">INS</div>
<div class="t" style="left:1635.8px;top:1029.00px;font-size:12.5px;color:#ffffff;font-weight:normal;;letter-spacing:-0.234px">19.02.2026</div>
<div class="t" style="left:1705.7px;top:1029.00px;font-size:12.5px;color:#ffffff;font-weight:normal;;letter-spacing:-0.375px">11:01</div>
<div class="t" style="left:1743.2px;top:1029.00px;font-size:12.5px;color:#ffffff;font-weight:normal;;letter-spacing:-0.170px">8.4320.13</div>
<div style="position:absolute;left:56px;top:1046px;width:1747px;height:47px;background:#eeeeee"></div>
<div style="position:absolute;left:696px;top:1059px;width:11.3px;height:11.3px;background:linear-gradient(135deg,#3fb5f5,#1a7fd6)"></div>
<div style="position:absolute;left:708.3px;top:1059px;width:11.3px;height:11.3px;background:linear-gradient(135deg,#3fb5f5,#1a7fd6)"></div>
<div style="position:absolute;left:696px;top:1071.3px;width:11.3px;height:11.3px;background:linear-gradient(135deg,#3fb5f5,#1a7fd6)"></div>
<div style="position:absolute;left:708.3px;top:1071.3px;width:11.3px;height:11.3px;background:linear-gradient(135deg,#3fb5f5,#1a7fd6)"></div>
<div style="position:absolute;left:733px;top:1055px;width:218px;height:30px;background:#fafafa;border:1px solid #dcdcdc;border-radius:15px;box-sizing:border-box"></div>
<svg style="position:absolute;left:743px;top:1061px;" width="18" height="18" viewBox="0 0 18 18"><circle cx="7.3" cy="7.3" r="5.8" stroke="#1a1a1a" stroke-width="1.8" fill="none"/><path d="M11.5 11.5 L16 16" stroke="#1a1a1a" stroke-width="2"/></svg>
<div class="t" style="left:769.6px;top:1064.00px;font-size:13.5px;color:#5f5f5f;font-weight:normal;;letter-spacing:-0.368px">Suche</div>
<div style="position:absolute;left:966px;top:1059px;width:19px;height:17px;background:linear-gradient(135deg,#ffffff,#d0d0d0);border-radius:2px"></div>
<div style="position:absolute;left:964px;top:1063px;width:16px;height:16px;background:#1f1f1f;border-radius:1px"></div>
<div style="position:absolute;left:968px;top:1063px;width:12px;height:12px;background:linear-gradient(135deg,#cfcfcf,#a8a8a8)"></div>
<svg style="position:absolute;left:1008px;top:1058px;" width="25" height="22" viewBox="0 0 25 22"><path d="M0 3 Q0 1 2 1 H9 L11 3 H23 Q25 3 25 5 V19 Q25 21 23 21 H2 Q0 21 0 19 Z" fill="#f5c53a"/><path d="M0 7 H25 V19 Q25 21 23 21 H2 Q0 21 0 19 Z" fill="#ffd34f"/><rect x="6.5" y="15.5" width="12" height="5.5" rx="1" fill="#1d72c8"/></svg>
<svg style="position:absolute;left:1053px;top:1058px;" width="24" height="24" viewBox="0 0 24 24"><circle cx="12" cy="12" r="11.8" fill="#db4437"/><path d="M12 12 L1.8 6 A11.8 11.8 0 0 0 6.1 22.2 Z" fill="#0f9d58"/><path d="M12 12 L6.1 22.2 A11.8 11.8 0 0 0 22.2 6 Z" fill="#ffcd40"/><path d="M12 6 H22.2" stroke="#ffcd40" stroke-width="0"/><circle cx="12" cy="12" r="5.3" fill="#fff"/><circle cx="12" cy="12" r="4.2" fill="#1a73e8"/></svg>
<svg style="position:absolute;left:1096px;top:1057px;" width="25" height="26" viewBox="0 0 25 26"><circle cx="12.5" cy="12" r="10.3" stroke="#ee7f22" stroke-width="3" fill="none"/><path d="M12.5 5.5 V13.5" stroke="#ee7f22" stroke-width="3.2" stroke-linecap="round"/><circle cx="12.5" cy="19" r="2.5" fill="#ee7f22"/></svg>
<div style="position:absolute;left:1104px;top:1086px;width:8px;height:3px;background:#6e6e6e;border-radius:2px"></div>
<svg style="position:absolute;left:1143px;top:1058px;" width="20" height="24" viewBox="0 0 20 24"><path d="M0.8 0.8 H13 L19 6.8 V23 H0.8 Z" stroke="#9a9a9a" stroke-width="1" fill="#fdfdfd"/><path d="M13 0.8 V6.8 H19" stroke="#9a9a9a" stroke-width="1" fill="#eee"/></svg>
<div style="position:absolute;left:1149px;top:1086px;width:8px;height:3px;background:#6e6e6e;border-radius:2px"></div>
<svg style="position:absolute;left:1606px;top:1065px;" width="14" height="9" viewBox="0 0 14 9"><path d="M1 8 L7 2 L13 8" stroke="#222" stroke-width="1.4" fill="none"/></svg>
<svg style="position:absolute;left:1637px;top:1063px;" width="18" height="17" viewBox="0 0 18 17"><rect x="0.5" y="2" width="5" height="12" fill="#2a6fc9"/><rect x="6.5" y="4" width="3" height="8" fill="#6aa0e0"/><rect x="10" y="1" width="6.5" height="11" fill="#9ad0f5"/><circle cx="13.5" cy="12.5" r="3" fill="#fff" stroke="#cc1f1f" stroke-width="1.6"/></svg>
<svg style="position:absolute;left:1668px;top:1061px;" width="19" height="18" viewBox="0 0 19 18"><rect x="0.7" y="2.5" width="13" height="10" stroke="#222" stroke-width="1.2" fill="none"/><path d="M4 16 H11 M7.2 12.5 V16" stroke="#222" stroke-width="1.2"/><rect x="12.5" y="0.6" width="5" height="9" stroke="#222" stroke-width="1.1" fill="#eee"/><path d="M14 3 H16" stroke="#222" stroke-width="1"/></svg>
<svg style="position:absolute;left:1692px;top:1061px;" width="19" height="18" viewBox="0 0 19 18"><path d="M1 6 H4 L8.5 2 V16 L4 12 H1 Z" stroke="#222" stroke-width="1.2" fill="none"/><path d="M11 6 Q13 9 11 12 M13.5 4 Q17 9 13.5 14 M16 2 Q20.5 9 16 16" stroke="#222" stroke-width="1.1" fill="none"/></svg>
<div class="t" style="left:1755px;top:1057.00px;font-size:11.4px;color:#1a1a1a;font-weight:normal;;letter-spacing:0.169px">11:01</div>
<div class="t" style="left:1726.4px;top:1073.00px;font-size:11.4px;color:#1a1a1a;font-weight:normal;;letter-spacing:-0.008px">19.02.2026</div>
</div></body></html>
